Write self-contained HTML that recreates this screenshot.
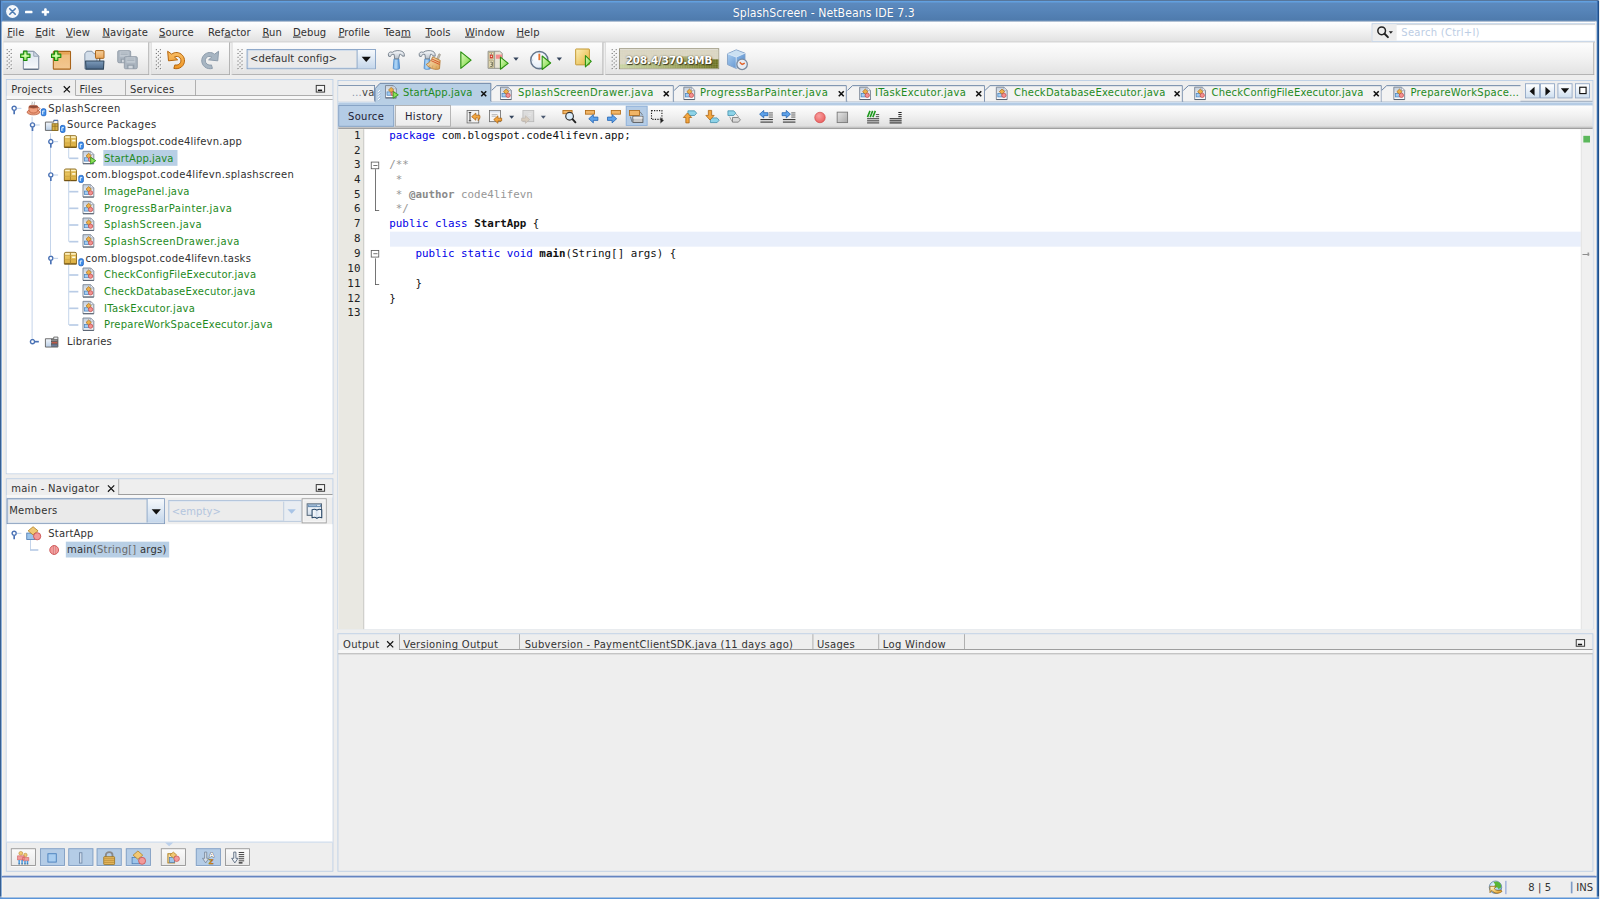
<!DOCTYPE html><html><head><meta charset="utf-8"><title>SplashScreen - NetBeans IDE 7.3</title><style>
html,body{margin:0;padding:0;background:#f6f6f6;}
body{width:1600px;height:899px;overflow:hidden;}
#root{position:absolute;left:0;top:0;width:1918.8px;height:1079px;transform:scale(.833333);transform-origin:0 0;background:#eeeeee;font-family:"DejaVu Sans","Liberation Sans",sans-serif;font-size:12px;color:#323232;overflow:hidden;}
#root div{position:absolute;box-sizing:border-box;}
.t{position:absolute;white-space:nowrap;line-height:20px;height:20px;letter-spacing:.35px;}
.m{position:absolute;white-space:nowrap;line-height:20px;height:20px;letter-spacing:.1px;}
.m u{text-decoration:underline;text-decoration-thickness:1.3px;text-underline-offset:1.4px;text-decoration-color:#000;}
.g{color:#1e8a1e;}
.code{position:absolute;white-space:pre;font-family:"DejaVu Sans Mono","Liberation Mono",monospace;font-size:13px;line-height:17.7px;height:17.7px;color:#111;}
.kw{color:#0000e6;}
.cm{color:#969696;}
.ln{position:absolute;white-space:pre;font-family:"DejaVu Sans Mono","Liberation Mono",monospace;font-size:13px;line-height:17.7px;height:17.7px;color:#222;text-align:right;width:26px;}
.tbg{background:linear-gradient(#fdfdfd,#f3f3f3 45%,#e3e3e3);border-right:1px solid #a9a9a9;border-bottom:1px solid #a9a9a9;border-left:1px solid #d9d9d9;}
.panel{border:1px solid #b9cde5;background:#eeeeee;}
.sep{background:#a4a4a4;width:1px;}
.btn{border:1px solid #8f8f8f;background:linear-gradient(#fbfbfb,#e9e9e9);box-shadow:0 1px 0 #fff;}
.btn.on{background:#b4cce6;border-color:#7f9cc0;}
</style></head><body><div id="root">
<div style="left:0px;top:0px;width:1918.8px;height:26px;background:linear-gradient(#5e8bbf,#5684b8 50%,#4e7aac);border-top:1.300px solid #27466e;border-bottom:1.500px solid #29568f;border-radius:3px 3px 0 0;"></div>
<div style="left:0px;top:1.3px;width:1918.8px;height:1.4px;background:#62a0e0"></div>
<svg style="position:absolute;left:6px;top:5px;overflow:visible" width="20" height="18" viewBox="0 0 20 18" ><circle cx="9" cy="8.800" r="7.700" fill="#f4f7fb"/><path d="M5.700 5.500l6.600 6.600M12.300 5.500l-6.600 6.600" stroke="#4f7db3" stroke-width="1.900" stroke-linecap="round"/></svg>
<div style="left:30px;top:13.2px;width:9.2px;height:2.5px;background:#fff;border-radius:1px"></div>
<div style="left:49.7px;top:13.2px;width:9.2px;height:2.5px;background:#fff;border-radius:1px"></div>
<div style="left:53.1px;top:9.8px;width:2.5px;height:9.2px;background:#fff;border-radius:1px"></div>
<span style="position:absolute;left:0;width:1977px;text-align:center;top:4.500px;line-height:20px;color:#fff;padding-left:0px;letter-spacing:.06px;font-family:'DejaVu Sans Condensed','DejaVu Sans',sans-serif;font-size:14.6px;text-shadow:0 1px 1px rgba(30,60,110,.6)">SplashScreen - NetBeans IDE 7.3</span>
<div style="left:2.4px;top:26.2px;width:1914px;height:25px;background:linear-gradient(#ffffff,#f4f4f4 40%,#e2e2e2);border-bottom:1.200px solid #bcbcbc;"></div>
<span class="m" style="left:8.8px;top:29.4px"><u>F</u>ile</span>
<span class="m" style="left:42.5px;top:29.4px"><u>E</u>dit</span>
<span class="m" style="left:79.2px;top:29.4px"><u>V</u>iew</span>
<span class="m" style="left:122.9px;top:29.4px"><u>N</u>avigate</span>
<span class="m" style="left:190.8px;top:29.4px"><u>S</u>ource</span>
<span class="m" style="left:249.6px;top:29.4px">Ref<u>a</u>ctor</span>
<span class="m" style="left:314.9px;top:29.4px"><u>R</u>un</span>
<span class="m" style="left:351.6px;top:29.4px"><u>D</u>ebug</span>
<span class="m" style="left:406.1px;top:29.4px"><u>P</u>rofile</span>
<span class="m" style="left:460.8px;top:29.4px">Tea<u>m</u></span>
<span class="m" style="left:510.6px;top:29.4px"><u>T</u>ools</span>
<span class="m" style="left:558px;top:29.4px"><u>W</u>indow</span>
<span class="m" style="left:619.8px;top:29.4px"><u>H</u>elp</span>
<div style="left:1646px;top:27.6px;width:269.5px;height:22px;background:#fff;border:1px solid #b7cbe3;box-shadow:inset 0 1px 1px #d8d8d8;"></div>
<div style="left:1647px;top:28.6px;width:29.4px;height:20px;background:#ededed"></div>
<svg style="position:absolute;left:1652px;top:31px;overflow:visible" width="20" height="15" viewBox="0 0 20 15" ><circle cx="6" cy="6" r="4.600" fill="none" stroke="#222" stroke-width="1.800"/><path d="M9.500 9.500l4 4" stroke="#222" stroke-width="2.400" stroke-linecap="round"/><path d="M14.500 6.500h5l-2.500 3z" fill="#222"/></svg>
<span class="m" style="left:1681.6px;top:28.8px;letter-spacing:.32px;color:#bccde4">Search (Ctrl+I)</span>
<div class="tbg" style="left:2.6px;top:51.2px;width:176.4px;height:38.4px;"></div>
<div class="tbg" style="left:180.8px;top:51.2px;width:95.19999999999999px;height:38.4px;"></div>
<div class="tbg" style="left:278px;top:51.2px;width:446.20000000000005px;height:38.4px;"></div>
<div class="tbg" style="left:726.2px;top:51.2px;width:1186.3999999999999px;height:38.4px;"></div>
<svg style="position:absolute;left:8.4px;top:59.2px;overflow:visible" width="7" height="26" viewBox="0 0 7 26" ><rect x="1" y="1.00" width="1.200" height="1.200" fill="#fff"/><rect x="0" y="0.00" width="1.300" height="1.300" fill="#6e6e6e"/><rect x="5.8" y="1.00" width="1.200" height="1.200" fill="#fff"/><rect x="4.8" y="0.00" width="1.300" height="1.300" fill="#6e6e6e"/><rect x="3.4" y="3.27" width="1.200" height="1.200" fill="#fff"/><rect x="2.4" y="2.27" width="1.300" height="1.300" fill="#6e6e6e"/><rect x="1" y="5.54" width="1.200" height="1.200" fill="#fff"/><rect x="0" y="4.54" width="1.300" height="1.300" fill="#6e6e6e"/><rect x="5.8" y="5.54" width="1.200" height="1.200" fill="#fff"/><rect x="4.8" y="4.54" width="1.300" height="1.300" fill="#6e6e6e"/><rect x="3.4" y="7.81" width="1.200" height="1.200" fill="#fff"/><rect x="2.4" y="6.81" width="1.300" height="1.300" fill="#6e6e6e"/><rect x="1" y="10.08" width="1.200" height="1.200" fill="#fff"/><rect x="0" y="9.08" width="1.300" height="1.300" fill="#6e6e6e"/><rect x="5.8" y="10.08" width="1.200" height="1.200" fill="#fff"/><rect x="4.8" y="9.08" width="1.300" height="1.300" fill="#6e6e6e"/><rect x="3.4" y="12.35" width="1.200" height="1.200" fill="#fff"/><rect x="2.4" y="11.35" width="1.300" height="1.300" fill="#6e6e6e"/><rect x="1" y="14.62" width="1.200" height="1.200" fill="#fff"/><rect x="0" y="13.62" width="1.300" height="1.300" fill="#6e6e6e"/><rect x="5.8" y="14.62" width="1.200" height="1.200" fill="#fff"/><rect x="4.8" y="13.62" width="1.300" height="1.300" fill="#6e6e6e"/><rect x="3.4" y="16.89" width="1.200" height="1.200" fill="#fff"/><rect x="2.4" y="15.89" width="1.300" height="1.300" fill="#6e6e6e"/><rect x="1" y="19.16" width="1.200" height="1.200" fill="#fff"/><rect x="0" y="18.16" width="1.300" height="1.300" fill="#6e6e6e"/><rect x="5.8" y="19.16" width="1.200" height="1.200" fill="#fff"/><rect x="4.8" y="18.16" width="1.300" height="1.300" fill="#6e6e6e"/><rect x="3.4" y="21.43" width="1.200" height="1.200" fill="#fff"/><rect x="2.4" y="20.43" width="1.300" height="1.300" fill="#6e6e6e"/><rect x="1" y="23.70" width="1.200" height="1.200" fill="#fff"/><rect x="0" y="22.70" width="1.300" height="1.300" fill="#6e6e6e"/><rect x="5.8" y="23.70" width="1.200" height="1.200" fill="#fff"/><rect x="4.8" y="22.70" width="1.300" height="1.300" fill="#6e6e6e"/></svg>
<svg style="position:absolute;left:186.6px;top:59.2px;overflow:visible" width="7" height="26" viewBox="0 0 7 26" ><rect x="1" y="1.00" width="1.200" height="1.200" fill="#fff"/><rect x="0" y="0.00" width="1.300" height="1.300" fill="#6e6e6e"/><rect x="5.8" y="1.00" width="1.200" height="1.200" fill="#fff"/><rect x="4.8" y="0.00" width="1.300" height="1.300" fill="#6e6e6e"/><rect x="3.4" y="3.27" width="1.200" height="1.200" fill="#fff"/><rect x="2.4" y="2.27" width="1.300" height="1.300" fill="#6e6e6e"/><rect x="1" y="5.54" width="1.200" height="1.200" fill="#fff"/><rect x="0" y="4.54" width="1.300" height="1.300" fill="#6e6e6e"/><rect x="5.8" y="5.54" width="1.200" height="1.200" fill="#fff"/><rect x="4.8" y="4.54" width="1.300" height="1.300" fill="#6e6e6e"/><rect x="3.4" y="7.81" width="1.200" height="1.200" fill="#fff"/><rect x="2.4" y="6.81" width="1.300" height="1.300" fill="#6e6e6e"/><rect x="1" y="10.08" width="1.200" height="1.200" fill="#fff"/><rect x="0" y="9.08" width="1.300" height="1.300" fill="#6e6e6e"/><rect x="5.8" y="10.08" width="1.200" height="1.200" fill="#fff"/><rect x="4.8" y="9.08" width="1.300" height="1.300" fill="#6e6e6e"/><rect x="3.4" y="12.35" width="1.200" height="1.200" fill="#fff"/><rect x="2.4" y="11.35" width="1.300" height="1.300" fill="#6e6e6e"/><rect x="1" y="14.62" width="1.200" height="1.200" fill="#fff"/><rect x="0" y="13.62" width="1.300" height="1.300" fill="#6e6e6e"/><rect x="5.8" y="14.62" width="1.200" height="1.200" fill="#fff"/><rect x="4.8" y="13.62" width="1.300" height="1.300" fill="#6e6e6e"/><rect x="3.4" y="16.89" width="1.200" height="1.200" fill="#fff"/><rect x="2.4" y="15.89" width="1.300" height="1.300" fill="#6e6e6e"/><rect x="1" y="19.16" width="1.200" height="1.200" fill="#fff"/><rect x="0" y="18.16" width="1.300" height="1.300" fill="#6e6e6e"/><rect x="5.8" y="19.16" width="1.200" height="1.200" fill="#fff"/><rect x="4.8" y="18.16" width="1.300" height="1.300" fill="#6e6e6e"/><rect x="3.4" y="21.43" width="1.200" height="1.200" fill="#fff"/><rect x="2.4" y="20.43" width="1.300" height="1.300" fill="#6e6e6e"/><rect x="1" y="23.70" width="1.200" height="1.200" fill="#fff"/><rect x="0" y="22.70" width="1.300" height="1.300" fill="#6e6e6e"/><rect x="5.8" y="23.70" width="1.200" height="1.200" fill="#fff"/><rect x="4.8" y="22.70" width="1.300" height="1.300" fill="#6e6e6e"/></svg>
<svg style="position:absolute;left:284.6px;top:59.2px;overflow:visible" width="7" height="26" viewBox="0 0 7 26" ><rect x="1" y="1.00" width="1.200" height="1.200" fill="#fff"/><rect x="0" y="0.00" width="1.300" height="1.300" fill="#6e6e6e"/><rect x="5.8" y="1.00" width="1.200" height="1.200" fill="#fff"/><rect x="4.8" y="0.00" width="1.300" height="1.300" fill="#6e6e6e"/><rect x="3.4" y="3.27" width="1.200" height="1.200" fill="#fff"/><rect x="2.4" y="2.27" width="1.300" height="1.300" fill="#6e6e6e"/><rect x="1" y="5.54" width="1.200" height="1.200" fill="#fff"/><rect x="0" y="4.54" width="1.300" height="1.300" fill="#6e6e6e"/><rect x="5.8" y="5.54" width="1.200" height="1.200" fill="#fff"/><rect x="4.8" y="4.54" width="1.300" height="1.300" fill="#6e6e6e"/><rect x="3.4" y="7.81" width="1.200" height="1.200" fill="#fff"/><rect x="2.4" y="6.81" width="1.300" height="1.300" fill="#6e6e6e"/><rect x="1" y="10.08" width="1.200" height="1.200" fill="#fff"/><rect x="0" y="9.08" width="1.300" height="1.300" fill="#6e6e6e"/><rect x="5.8" y="10.08" width="1.200" height="1.200" fill="#fff"/><rect x="4.8" y="9.08" width="1.300" height="1.300" fill="#6e6e6e"/><rect x="3.4" y="12.35" width="1.200" height="1.200" fill="#fff"/><rect x="2.4" y="11.35" width="1.300" height="1.300" fill="#6e6e6e"/><rect x="1" y="14.62" width="1.200" height="1.200" fill="#fff"/><rect x="0" y="13.62" width="1.300" height="1.300" fill="#6e6e6e"/><rect x="5.8" y="14.62" width="1.200" height="1.200" fill="#fff"/><rect x="4.8" y="13.62" width="1.300" height="1.300" fill="#6e6e6e"/><rect x="3.4" y="16.89" width="1.200" height="1.200" fill="#fff"/><rect x="2.4" y="15.89" width="1.300" height="1.300" fill="#6e6e6e"/><rect x="1" y="19.16" width="1.200" height="1.200" fill="#fff"/><rect x="0" y="18.16" width="1.300" height="1.300" fill="#6e6e6e"/><rect x="5.8" y="19.16" width="1.200" height="1.200" fill="#fff"/><rect x="4.8" y="18.16" width="1.300" height="1.300" fill="#6e6e6e"/><rect x="3.4" y="21.43" width="1.200" height="1.200" fill="#fff"/><rect x="2.4" y="20.43" width="1.300" height="1.300" fill="#6e6e6e"/><rect x="1" y="23.70" width="1.200" height="1.200" fill="#fff"/><rect x="0" y="22.70" width="1.300" height="1.300" fill="#6e6e6e"/><rect x="5.8" y="23.70" width="1.200" height="1.200" fill="#fff"/><rect x="4.8" y="22.70" width="1.300" height="1.300" fill="#6e6e6e"/></svg>
<svg style="position:absolute;left:734px;top:59.2px;overflow:visible" width="7" height="26" viewBox="0 0 7 26" ><rect x="1" y="1.00" width="1.200" height="1.200" fill="#fff"/><rect x="0" y="0.00" width="1.300" height="1.300" fill="#6e6e6e"/><rect x="5.8" y="1.00" width="1.200" height="1.200" fill="#fff"/><rect x="4.8" y="0.00" width="1.300" height="1.300" fill="#6e6e6e"/><rect x="3.4" y="3.27" width="1.200" height="1.200" fill="#fff"/><rect x="2.4" y="2.27" width="1.300" height="1.300" fill="#6e6e6e"/><rect x="1" y="5.54" width="1.200" height="1.200" fill="#fff"/><rect x="0" y="4.54" width="1.300" height="1.300" fill="#6e6e6e"/><rect x="5.8" y="5.54" width="1.200" height="1.200" fill="#fff"/><rect x="4.8" y="4.54" width="1.300" height="1.300" fill="#6e6e6e"/><rect x="3.4" y="7.81" width="1.200" height="1.200" fill="#fff"/><rect x="2.4" y="6.81" width="1.300" height="1.300" fill="#6e6e6e"/><rect x="1" y="10.08" width="1.200" height="1.200" fill="#fff"/><rect x="0" y="9.08" width="1.300" height="1.300" fill="#6e6e6e"/><rect x="5.8" y="10.08" width="1.200" height="1.200" fill="#fff"/><rect x="4.8" y="9.08" width="1.300" height="1.300" fill="#6e6e6e"/><rect x="3.4" y="12.35" width="1.200" height="1.200" fill="#fff"/><rect x="2.4" y="11.35" width="1.300" height="1.300" fill="#6e6e6e"/><rect x="1" y="14.62" width="1.200" height="1.200" fill="#fff"/><rect x="0" y="13.62" width="1.300" height="1.300" fill="#6e6e6e"/><rect x="5.8" y="14.62" width="1.200" height="1.200" fill="#fff"/><rect x="4.8" y="13.62" width="1.300" height="1.300" fill="#6e6e6e"/><rect x="3.4" y="16.89" width="1.200" height="1.200" fill="#fff"/><rect x="2.4" y="15.89" width="1.300" height="1.300" fill="#6e6e6e"/><rect x="1" y="19.16" width="1.200" height="1.200" fill="#fff"/><rect x="0" y="18.16" width="1.300" height="1.300" fill="#6e6e6e"/><rect x="5.8" y="19.16" width="1.200" height="1.200" fill="#fff"/><rect x="4.8" y="18.16" width="1.300" height="1.300" fill="#6e6e6e"/><rect x="3.4" y="21.43" width="1.200" height="1.200" fill="#fff"/><rect x="2.4" y="20.43" width="1.300" height="1.300" fill="#6e6e6e"/><rect x="1" y="23.70" width="1.200" height="1.200" fill="#fff"/><rect x="0" y="22.70" width="1.300" height="1.300" fill="#6e6e6e"/><rect x="5.8" y="23.70" width="1.200" height="1.200" fill="#fff"/><rect x="4.8" y="22.70" width="1.300" height="1.300" fill="#6e6e6e"/></svg>
<svg style="position:absolute;left:23.8px;top:60px;overflow:visible" width="24" height="24" viewBox="0 0 24 24" ><defs><linearGradient id="nf1" x1="0" y1="0" x2="0" y2="1"><stop offset="0" stop-color="#dde5ef"/><stop offset=".8" stop-color="#f1f5f9"/><stop offset="1" stop-color="#ffffff"/></linearGradient></defs>
<path d="M4 1.500h12.500l6 6V23H4z" fill="url(#nf1)" stroke="#76869b" stroke-width="1.200" stroke-linejoin="round"/>
<path d="M4.500 23.200h17.500" stroke="#5f6e82" stroke-width="1.400"/>
<path d="M16.500 1.500v6h6z" fill="#cfd9e6" stroke="#8a98ab" stroke-width="1" stroke-linejoin="round"/><defs><radialGradient id="plga" cx=".5" cy=".45" r=".6"><stop offset="0" stop-color="#e4ffc4"/><stop offset="1" stop-color="#74dc3c"/></radialGradient></defs>
<path d="M.8 5h3.600V1.400h4v3.600h3.600v4H8.400v3.600h-4V9H.8z" fill="url(#plga)" stroke="#1a8a0c" stroke-width="1.300" stroke-linejoin="round"/></svg>
<svg style="position:absolute;left:61.2px;top:60px;overflow:visible" width="24" height="24" viewBox="0 0 24 24" ><defs><linearGradient id="np1" x1="0" y1="0" x2="0" y2="1"><stop offset="0" stop-color="#f7d9ae"/><stop offset=".2" stop-color="#efbd7e"/><stop offset="1" stop-color="#f3c892"/></linearGradient></defs>
<rect x="3" y="1.700" width="20.600" height="21.300" rx=".8" fill="url(#np1)" stroke="#a9641a" stroke-width="1.300"/>
<rect x="3.800" y="2.500" width="19" height="3" fill="#e39a45" opacity=".8"/><defs><radialGradient id="plgb" cx=".5" cy=".45" r=".6"><stop offset="0" stop-color="#e4ffc4"/><stop offset="1" stop-color="#74dc3c"/></radialGradient></defs>
<path d="M.8 5h3.600V1.400h4v3.600h3.600v4H8.400v3.600h-4V9H.8z" fill="url(#plgb)" stroke="#1a8a0c" stroke-width="1.300" stroke-linejoin="round"/></svg>
<svg style="position:absolute;left:101px;top:60px;overflow:visible" width="24" height="24" viewBox="0 0 24 24" ><defs><linearGradient id="op1" x1="0" y1="0" x2="0" y2="1"><stop offset="0" stop-color="#7d9bba"/><stop offset="1" stop-color="#4a6788"/></linearGradient>
<linearGradient id="op2" x1="0" y1="0" x2="0" y2="1"><stop offset="0" stop-color="#f5cf9c"/><stop offset="1" stop-color="#eaa65a"/></linearGradient></defs>
<path d="M.8 22.500V4.500l2.500-3h6l2.500 3h3.500v18z" fill="#d3deea" stroke="#8595aa" stroke-width="1.200" stroke-linejoin="round"/>
<rect x="13.600" y=".7" width="10.200" height="9.300" rx=".6" fill="url(#op2)" stroke="#a9641a" stroke-width="1.200"/>
<path d="M18.700 10v3.500" stroke="#5a4a38" stroke-width="1.300"/>
<path d="M2.200 23l-.5-9.800h22l-.6 9.800z" fill="url(#op1)" stroke="#33495f" stroke-width="1.300" stroke-linejoin="round"/></svg>
<svg style="position:absolute;left:141px;top:60px;overflow:visible" width="24" height="24" viewBox="0 0 24 24" ><g opacity=".9"><rect x="0.3" y="0.8" width="15.5" height="14.5" rx="1.500" fill="#a5b0bc" stroke="#8893a0" stroke-width="1.100"/>
<rect x="2.8" y="1.6" width="10.5" height="6.5" fill="#bcc5ce"/><path d="M3.8 3.5999999999999996h8.5M3.8 5.3999999999999995h8.5" stroke="#9aa5b1" stroke-width=".9"/>
<rect x="3.8" y="10.4" width="8.5" height="5.0" fill="#8a96a3"/><rect x="5.3" y="11.7" width="5.0" height="3.1" fill="#cfd5dc"/><rect x="8.2" y="8" width="15.5" height="14.5" rx="1.500" fill="#a5b0bc" stroke="#8893a0" stroke-width="1.100"/>
<rect x="10.7" y="8.8" width="10.5" height="6.5" fill="#bcc5ce"/><path d="M11.7 10.8h8.5M11.7 12.6h8.5" stroke="#9aa5b1" stroke-width=".9"/>
<rect x="11.7" y="17.6" width="8.5" height="5.0" fill="#8a96a3"/><rect x="13.2" y="18.9" width="5.0" height="3.1" fill="#cfd5dc"/></g></svg>
<svg style="position:absolute;left:200.2px;top:60px;overflow:visible" width="24" height="24" viewBox="0 0 24 24" ><defs><linearGradient id="un1" x1="0" y1="0" x2="0" y2="1"><stop offset="0" stop-color="#f9c06a"/><stop offset="1" stop-color="#ee9420"/></linearGradient></defs>
<path d="M1.200 1.500l1 11.500 11-1.200-3.800-3.300c2.200-1.300 4.800-1 6.500.8 2 2.300 1.600 5.800-.8 7.600-1.600 1.200-3.400 1.500-5.300 1l-1.200 4.200c3.200.9 6.700.2 9.300-1.900 4.300-3.500 4.700-10 .9-14C15.300 2.400 9.800 2 6 5z" fill="url(#un1)" stroke="#b5650c" stroke-width="1.200" stroke-linejoin="round"/></svg>
<svg style="position:absolute;left:240.2px;top:60px;overflow:visible" width="24" height="24" viewBox="0 0 24 24" ><g transform="translate(23.500,0) scale(-1,1)"><path d="M1.200 1.500l1 11.500 11-1.200-3.800-3.300c2.200-1.300 4.800-1 6.500.8 2 2.300 1.600 5.800-.8 7.600-1.600 1.200-3.400 1.500-5.300 1l-1.200 4.200c3.200.9 6.700.2 9.300-1.900 4.300-3.500 4.700-10 .9-14C15.300 2.400 9.800 2 6 5z" fill="#a7b5c2" stroke="#8d9cab" stroke-width="1.200" stroke-linejoin="round"/></g></svg>
<div style="left:296.4px;top:59px;width:154.4px;height:23.6px;border:1px solid #7d9cc4;background:#eaeaea;box-shadow:inset 0 0 0 1px #c9d9ec;"></div>
<div style="left:428.4px;top:60px;width:21.4px;height:21.6px;background:linear-gradient(#f6f9fc,#c5d7eb);border-left:1px solid #7d9cc4;"></div>
<svg style="position:absolute;left:433.5px;top:67.5px;overflow:visible" width="11" height="7" viewBox="0 0 11 7" ><path d="M0 0h11L5.500 6.500z" fill="#111"/></svg>
<span class="m" style="left:300px;top:60.4px;letter-spacing:.12px">&lt;default config&gt;</span>
<svg style="position:absolute;left:465.4px;top:59.8px;overflow:visible" width="24" height="24" viewBox="0 0 24 24" ><defs><linearGradient id="hm1" x1="0" y1="0" x2="1" y2="0"><stop offset="0" stop-color="#7fb6ea"/><stop offset=".45" stop-color="#b4d8f6"/><stop offset="1" stop-color="#4f92d6"/></linearGradient>
<linearGradient id="hm2" x1="0" y1="0" x2="0" y2="1"><stop offset="0" stop-color="#fbfcfd"/><stop offset="1" stop-color="#b4bec9"/></linearGradient></defs>
<g transform="translate(0,0)"><path d="M7.800 10.600h5.800l.9 11.400c0 1.600-7.600 1.600-7.600 0z" fill="url(#hm1)" stroke="#3f7fc4" stroke-width=".9" stroke-linejoin="round"/>
<path d="M1 6C.6 3.200 3 1.600 5.800 2.800 8.500.4 14.500.2 17.400 1.600c2.200 1 3.200 3.200 2.800 5.900l-2.700-.3c-.3-1.500-1.300-2.100-2.800-2.100L13.200 10.600H8.600L8 5.400C6 4.600 4.200 5.600 3.600 7.800L1.500 7.600z" fill="url(#hm2)" stroke="#737e8a" stroke-width="1.100" stroke-linejoin="round"/></g></svg>
<svg style="position:absolute;left:502.2px;top:59.8px;overflow:visible" width="27" height="24" viewBox="0 0 27 24" ><defs><linearGradient id="cb1" x1="0" y1="0" x2="1" y2="0"><stop offset="0" stop-color="#7fb6ea"/><stop offset=".45" stop-color="#b4d8f6"/><stop offset="1" stop-color="#4f92d6"/></linearGradient>
<linearGradient id="cb2" x1="0" y1="0" x2="0" y2="1"><stop offset="0" stop-color="#fbfcfd"/><stop offset="1" stop-color="#b4bec9"/></linearGradient></defs>
<g transform="translate(0,0)"><path d="M7.800 10.600h5.800l.9 11.400c0 1.600-7.600 1.600-7.600 0z" fill="url(#cb1)" stroke="#3f7fc4" stroke-width=".9" stroke-linejoin="round"/>
<path d="M1 6C.6 3.200 3 1.600 5.800 2.800 8.500.4 14.500.2 17.400 1.600c2.200 1 3.200 3.200 2.800 5.900l-2.700-.3c-.3-1.500-1.300-2.100-2.800-2.100L13.200 10.600H8.600L8 5.400C6 4.600 4.200 5.600 3.600 7.800L1.500 7.600z" fill="url(#cb2)" stroke="#737e8a" stroke-width="1.100" stroke-linejoin="round"/></g><defs><linearGradient id="cb3" x1="0" y1="0" x2="1" y2="1"><stop offset="0" stop-color="#fae6c0"/><stop offset="1" stop-color="#dda050"/></linearGradient></defs>
<path d="M24.800 4.500l1.800 1-2.600 6-2-.9z" fill="#c9c0b0" stroke="#8a8478" stroke-width=".7"/>
<path d="M17.200 8.200l9 4.200-.8 10.200c-4.800 1.800-11.400-.2-16-5.200 3.800-2 6.400-5 7.800-9.200z" fill="url(#cb3)" stroke="#b27a34" stroke-width="1" stroke-linejoin="round"/>
<path d="M16.300 10.800l9.500 4.300M15.400 12.800l10.200 4.600" stroke="#d65a30" stroke-width="1.200" fill="none"/>
<path d="M14 17.500l-1.500 2.500M17.500 18.500l-1 4M21.500 19.500v3.500" stroke="#c99a5c" stroke-width=".8"/></svg>
<svg style="position:absolute;left:551.6px;top:60.6px;overflow:visible" width="15" height="22" viewBox="0 0 15 22" ><defs><linearGradient id="rn1" x1="0" y1="0" x2="1" y2="1"><stop offset="0" stop-color="#e2fac8"/><stop offset=".55" stop-color="#a4e674"/><stop offset="1" stop-color="#52b82a"/></linearGradient></defs><path d="M1 1.200l12.300 9.900L1 21z" fill="url(#rn1)" stroke="#2a9010" stroke-width="1.400" stroke-linejoin="round"/></svg>
<svg style="position:absolute;left:585px;top:60px;overflow:visible" width="25" height="24" viewBox="0 0 25 24" ><defs><linearGradient id="db1" x1="0" y1="0" x2="1" y2="1"><stop offset="0" stop-color="#e2fac8"/><stop offset=".55" stop-color="#a4e674"/><stop offset="1" stop-color="#52b82a"/></linearGradient></defs>
<path d="M.7 1.500h14l3 2.500v18H.7z" fill="#e8e4d6" stroke="#86867e" stroke-width="1"/>
<path d="M8.500 1.500v20.500" stroke="#8f8f86" stroke-width="1"/>
<rect x="1.800" y="3" width="5.600" height="8" fill="#f4ecc8" stroke="#a39868" stroke-width=".7"/>
<rect x="2.800" y="5.500" width="3.600" height="4.600" fill="#c82a1c"/><rect x="3.800" y="6.800" width="1.600" height="1.800" fill="#f6d8d0"/><path d="M4.600 3.500v2" stroke="#555" stroke-width=".8"/>
<rect x="1.800" y="12.500" width="5.600" height="8.500" fill="#f4ecc8" stroke="#a39868" stroke-width=".7"/>
<path d="M3.200 14.500h2.600v2.600H3.800M5.800 17.100v2.600H3.200" stroke="#443" stroke-width=".9" fill="none"/>
<rect x="10" y="5.500" width="7.500" height="5" fill="#f58c8c"/>
<path d="M15.500 8.500l9.300 7.600-9.300 7z" fill="url(#db1)" stroke="#2a9010" stroke-width="1.300" stroke-linejoin="round"/></svg>
<svg style="position:absolute;left:615.8px;top:68.8px;overflow:visible" width="6.4" height="3.8" viewBox="0 0 6.4 3.8" ><path d="M0 0h6.400L3.200 3.800z" fill="#34445c"/></svg>
<svg style="position:absolute;left:635.8px;top:59.6px;overflow:visible" width="26" height="24" viewBox="0 0 26 24" ><defs><linearGradient id="pf1" x1="0" y1="0" x2="1" y2="1"><stop offset="0" stop-color="#e2fac8"/><stop offset=".55" stop-color="#a4e674"/><stop offset="1" stop-color="#52b82a"/></linearGradient><radialGradient id="pf2" cx=".4" cy=".35" r=".75"><stop offset="0" stop-color="#ffffff"/><stop offset=".7" stop-color="#e6eef7"/><stop offset="1" stop-color="#b9cde2"/></radialGradient></defs>
<circle cx="11.200" cy="12.200" r="10.300" fill="url(#pf2)" stroke="#63748a" stroke-width="1.700"/>
<path d="M11.200 4.500v7.700" stroke="#e8732e" stroke-width="2.200"/>
<path d="M11.200 2.500v1.500M2 12.200h1.500M11.200 20.500V22" stroke="#9fb0c4" stroke-width=".8"/>
<path d="M14.600 7.200l10.200 8.400-10.200 7.800z" fill="url(#pf1)" stroke="#2a9010" stroke-width="1.300" stroke-linejoin="round"/></svg>
<svg style="position:absolute;left:668px;top:68.8px;overflow:visible" width="6.4" height="3.8" viewBox="0 0 6.4 3.8" ><path d="M0 0h6.400L3.200 3.800z" fill="#34445c"/></svg>
<svg style="position:absolute;left:690.4px;top:57.6px;overflow:visible" width="21" height="23" viewBox="0 0 21 23" ><defs><linearGradient id="ts1" x1="0" y1="0" x2="1" y2="1"><stop offset="0" stop-color="#e2fac8"/><stop offset=".55" stop-color="#a4e674"/><stop offset="1" stop-color="#52b82a"/></linearGradient><linearGradient id="ts2" x1="0" y1="0" x2="1" y2="1"><stop offset="0" stop-color="#fdf0b8"/><stop offset="1" stop-color="#e3b23c"/></linearGradient></defs>
<rect x=".8" y=".8" width="16.500" height="19" rx=".5" fill="url(#ts2)" stroke="#c49a34" stroke-width="1.200"/>
<path d="M12.500 8.800l7 6.800-7 6.600z" fill="url(#ts1)" stroke="#2a9010" stroke-width="1.300" stroke-linejoin="round"/></svg>
<div style="left:742.8px;top:57.7px;width:120.2px;height:24.9px;border:1.200px solid #8c866c;overflow:hidden;"><svg style="position:absolute;left:0;top:0" width="120" height="25" viewBox="0 0 120 25"><defs><linearGradient id="mg1" x1="0" y1="0" x2="1" y2="0"><stop offset="0" stop-color="#c6d4a0"/><stop offset=".45" stop-color="#a3ae68"/><stop offset=".8" stop-color="#757e26"/><stop offset="1" stop-color="#5a620a"/></linearGradient></defs><rect width="120" height="25" fill="#d9d5c1"/><path d="M0 25V18h15l6-1.200 28-1.500 8-3.500 6.500-3h22l1-1.200.8 1.200v3.200h33v13z" fill="url(#mg1)"/><path d="M63 8.800h23v3h-23z" fill="#d9d5c1" opacity=".25"/><path d="M2.05 0V25" stroke="#e6e3d4" stroke-width=".5" opacity=".4"/><path d="M4.1 0V25" stroke="#e6e3d4" stroke-width=".5" opacity=".4"/><path d="M6.1499999999999995 0V25" stroke="#e6e3d4" stroke-width=".5" opacity=".4"/><path d="M8.2 0V25" stroke="#e6e3d4" stroke-width=".5" opacity=".4"/><path d="M10.25 0V25" stroke="#e6e3d4" stroke-width=".5" opacity=".4"/><path d="M12.299999999999999 0V25" stroke="#e6e3d4" stroke-width=".5" opacity=".4"/><path d="M14.349999999999998 0V25" stroke="#e6e3d4" stroke-width=".5" opacity=".4"/><path d="M16.4 0V25" stroke="#e6e3d4" stroke-width=".5" opacity=".4"/><path d="M18.45 0V25" stroke="#e6e3d4" stroke-width=".5" opacity=".4"/><path d="M20.5 0V25" stroke="#e6e3d4" stroke-width=".5" opacity=".4"/><path d="M22.549999999999997 0V25" stroke="#e6e3d4" stroke-width=".5" opacity=".4"/><path d="M24.599999999999998 0V25" stroke="#e6e3d4" stroke-width=".5" opacity=".4"/><path d="M26.65 0V25" stroke="#e6e3d4" stroke-width=".5" opacity=".4"/><path d="M28.699999999999996 0V25" stroke="#e6e3d4" stroke-width=".5" opacity=".4"/><path d="M30.749999999999996 0V25" stroke="#e6e3d4" stroke-width=".5" opacity=".4"/><path d="M32.8 0V25" stroke="#e6e3d4" stroke-width=".5" opacity=".4"/><path d="M34.849999999999994 0V25" stroke="#e6e3d4" stroke-width=".5" opacity=".4"/><path d="M36.9 0V25" stroke="#e6e3d4" stroke-width=".5" opacity=".4"/><path d="M38.949999999999996 0V25" stroke="#e6e3d4" stroke-width=".5" opacity=".4"/><path d="M41.0 0V25" stroke="#e6e3d4" stroke-width=".5" opacity=".4"/><path d="M43.05 0V25" stroke="#e6e3d4" stroke-width=".5" opacity=".4"/><path d="M45.099999999999994 0V25" stroke="#e6e3d4" stroke-width=".5" opacity=".4"/><path d="M47.15 0V25" stroke="#e6e3d4" stroke-width=".5" opacity=".4"/><path d="M49.199999999999996 0V25" stroke="#e6e3d4" stroke-width=".5" opacity=".4"/><path d="M51.24999999999999 0V25" stroke="#e6e3d4" stroke-width=".5" opacity=".4"/><path d="M53.3 0V25" stroke="#e6e3d4" stroke-width=".5" opacity=".4"/><path d="M55.349999999999994 0V25" stroke="#e6e3d4" stroke-width=".5" opacity=".4"/><path d="M57.39999999999999 0V25" stroke="#e6e3d4" stroke-width=".5" opacity=".4"/><path d="M59.449999999999996 0V25" stroke="#e6e3d4" stroke-width=".5" opacity=".4"/><path d="M61.49999999999999 0V25" stroke="#e6e3d4" stroke-width=".5" opacity=".4"/><path d="M63.55 0V25" stroke="#e6e3d4" stroke-width=".5" opacity=".4"/><path d="M65.6 0V25" stroke="#e6e3d4" stroke-width=".5" opacity=".4"/><path d="M67.64999999999999 0V25" stroke="#e6e3d4" stroke-width=".5" opacity=".4"/><path d="M69.69999999999999 0V25" stroke="#e6e3d4" stroke-width=".5" opacity=".4"/><path d="M71.75 0V25" stroke="#e6e3d4" stroke-width=".5" opacity=".4"/><path d="M73.8 0V25" stroke="#e6e3d4" stroke-width=".5" opacity=".4"/><path d="M75.85 0V25" stroke="#e6e3d4" stroke-width=".5" opacity=".4"/><path d="M77.89999999999999 0V25" stroke="#e6e3d4" stroke-width=".5" opacity=".4"/><path d="M79.94999999999999 0V25" stroke="#e6e3d4" stroke-width=".5" opacity=".4"/><path d="M82.0 0V25" stroke="#e6e3d4" stroke-width=".5" opacity=".4"/><path d="M84.05 0V25" stroke="#e6e3d4" stroke-width=".5" opacity=".4"/><path d="M86.1 0V25" stroke="#e6e3d4" stroke-width=".5" opacity=".4"/><path d="M88.14999999999999 0V25" stroke="#e6e3d4" stroke-width=".5" opacity=".4"/><path d="M90.19999999999999 0V25" stroke="#e6e3d4" stroke-width=".5" opacity=".4"/><path d="M92.24999999999999 0V25" stroke="#e6e3d4" stroke-width=".5" opacity=".4"/><path d="M94.3 0V25" stroke="#e6e3d4" stroke-width=".5" opacity=".4"/><path d="M96.35 0V25" stroke="#e6e3d4" stroke-width=".5" opacity=".4"/><path d="M98.39999999999999 0V25" stroke="#e6e3d4" stroke-width=".5" opacity=".4"/><path d="M100.44999999999999 0V25" stroke="#e6e3d4" stroke-width=".5" opacity=".4"/><path d="M102.49999999999999 0V25" stroke="#e6e3d4" stroke-width=".5" opacity=".4"/><path d="M104.55 0V25" stroke="#e6e3d4" stroke-width=".5" opacity=".4"/><path d="M106.6 0V25" stroke="#e6e3d4" stroke-width=".5" opacity=".4"/><path d="M108.64999999999999 0V25" stroke="#e6e3d4" stroke-width=".5" opacity=".4"/><path d="M110.69999999999999 0V25" stroke="#e6e3d4" stroke-width=".5" opacity=".4"/><path d="M112.74999999999999 0V25" stroke="#e6e3d4" stroke-width=".5" opacity=".4"/><path d="M114.79999999999998 0V25" stroke="#e6e3d4" stroke-width=".5" opacity=".4"/><path d="M116.85 0V25" stroke="#e6e3d4" stroke-width=".5" opacity=".4"/><path d="M118.89999999999999 0V25" stroke="#e6e3d4" stroke-width=".5" opacity=".4"/><path d="M0 2.05H120" stroke="#e6e3d4" stroke-width=".5" opacity=".4"/><path d="M0 4.1H120" stroke="#e6e3d4" stroke-width=".5" opacity=".4"/><path d="M0 6.1499999999999995H120" stroke="#e6e3d4" stroke-width=".5" opacity=".4"/><path d="M0 8.2H120" stroke="#e6e3d4" stroke-width=".5" opacity=".4"/><path d="M0 10.25H120" stroke="#e6e3d4" stroke-width=".5" opacity=".4"/><path d="M0 12.299999999999999H120" stroke="#e6e3d4" stroke-width=".5" opacity=".4"/><path d="M0 14.349999999999998H120" stroke="#e6e3d4" stroke-width=".5" opacity=".4"/><path d="M0 16.4H120" stroke="#e6e3d4" stroke-width=".5" opacity=".4"/><path d="M0 18.45H120" stroke="#e6e3d4" stroke-width=".5" opacity=".4"/><path d="M0 20.5H120" stroke="#e6e3d4" stroke-width=".5" opacity=".4"/><path d="M0 22.549999999999997H120" stroke="#e6e3d4" stroke-width=".5" opacity=".4"/></svg><span style="position:absolute;left:0;width:118px;text-align:center;top:3.900px;line-height:20px;font-weight:bold;font-size:12.400px;color:#fff;text-shadow:1px 1px 1px #3a3a20,0 0 2px #55553a;letter-spacing:-.05px">208.4/370.8MB</span></div>
<svg style="position:absolute;left:872.4px;top:58.6px;overflow:visible" width="26" height="26" viewBox="0 0 26 26" ><defs><linearGradient id="pr1" x1="0" y1="0" x2="1" y2="1"><stop offset="0" stop-color="#b5d6f5"/><stop offset="1" stop-color="#4a82c6"/></linearGradient></defs>
<path d="M1 5.500l10.500-4.700L22 4.800v12.500l-10.500 5.900L1 18.500z" fill="url(#pr1)" stroke="#86a2c6" stroke-width="1.100" stroke-linejoin="round"/>
<path d="M1.500 5.800l10 3.800 10-4.500L11.500 1.300z" fill="#cbe0f2"/>
<path d="M1 5.500l10.500 4 10.500-4.700M11.500 9.500v13.500" stroke="#dbe9f8" stroke-width="1" fill="none"/>
<circle cx="18.500" cy="18.200" r="6.300" fill="#e8edf4" stroke="#7b8ba0" stroke-width="1.600"/>
<path d="M18.500 18.400l-2.800-2.600M18.500 18.400l3.200-1.600" stroke="#e2622a" stroke-width="1.700" fill="none"/></svg>
<div class="panel" style="left:7px;top:95px;width:393.4px;height:474px;"></div>
<div style="left:8px;top:119.2px;width:391.4px;height:1px;background:#9a9a9a"></div>
<div style="left:8px;top:120.2px;width:391.4px;height:447.8px;background:#fff"></div>
<span class="t" style="left:13.4px;top:98.25px;letter-spacing:0.33px;">Projects</span>
<svg style="position:absolute;left:75.6px;top:103.2px;overflow:visible" width="8.4" height="8.4" viewBox="0 0 8.4 8.4" ><path d="M.5 .5l7.4 7.4M7.9 .5l-7.4 7.4" stroke="#111" stroke-width="1.4"/></svg>
<div class="sep" style="left:90px;top:96px;width:1.1px;height:19px;"></div>
<span class="t" style="left:95.4px;top:98.25px;letter-spacing:0.33px;">Files</span>
<div class="sep" style="left:150.2px;top:96px;width:1.1px;height:18.5px;"></div>
<span class="t" style="left:156px;top:98.25px;letter-spacing:0.33px;">Services</span>
<div class="sep" style="left:234.2px;top:96px;width:1.1px;height:18.5px;"></div>
<div style="left:90.6px;top:114px;width:308.8px;height:1.1px;background:#8e8e8e"></div>
<div style="left:8px;top:115.1px;width:391.4px;height:4.2px;background:#f7f7f7"></div>
<svg style="position:absolute;left:379px;top:102px;overflow:visible" width="11" height="9" viewBox="0 0 11 9" ><rect x=".5" y=".5" width="10" height="8" fill="#f4f4f4" stroke="#3a3a3a" stroke-width="1.200"/><rect x="2.500" y="5.500" width="5" height="1.800" fill="#111"/></svg>
<div style="left:37.699999999999996px;top:140px;width:1.2px;height:266px;background:#b9cce6"></div>
<div style="left:59.99999999999999px;top:160px;width:1.2px;height:146px;background:#b9cce6"></div>
<div style="left:82.30000000000001px;top:176px;width:1.2px;height:14px;background:#b9cce6"></div>
<div style="left:82.9px;top:189.4px;width:11.0px;height:1.2px;background:#b9cce6"></div>
<div style="left:82.30000000000001px;top:216px;width:1.2px;height:74px;background:#b9cce6"></div>
<div style="left:82.9px;top:229.4px;width:11.0px;height:1.2px;background:#b9cce6"></div>
<div style="left:82.9px;top:249.4px;width:11.0px;height:1.2px;background:#b9cce6"></div>
<div style="left:82.9px;top:269.4px;width:11.0px;height:1.2px;background:#b9cce6"></div>
<div style="left:82.9px;top:289.4px;width:11.0px;height:1.2px;background:#b9cce6"></div>
<div style="left:82.30000000000001px;top:316px;width:1.2px;height:74px;background:#b9cce6"></div>
<div style="left:82.9px;top:329.4px;width:11.0px;height:1.2px;background:#b9cce6"></div>
<div style="left:82.9px;top:349.4px;width:11.0px;height:1.2px;background:#b9cce6"></div>
<div style="left:82.9px;top:369.4px;width:11.0px;height:1.2px;background:#b9cce6"></div>
<div style="left:82.9px;top:389.4px;width:11.0px;height:1.2px;background:#b9cce6"></div>
<svg style="position:absolute;left:32.0px;top:120.8px;overflow:visible" width="17.4" height="17.4" viewBox="0 0 16 16" ><ellipse cx="7.500" cy="12.500" rx="7" ry="3" fill="#e89a7a" stroke="#b85a3a" stroke-width=".8"/>
<path d="M2.500 6.500h10v3c0 2.500-2 4-5 4s-5-1.500-5-4z" fill="#f0a080" stroke="#b85a3a" stroke-width=".8"/>
<ellipse cx="7.500" cy="6.500" rx="5" ry="1.600" fill="#8a4a3a" stroke="#b85a3a" stroke-width=".6"/>
<path d="M12.500 7.500c2.500-.5 3 2.500 0 3" fill="none" stroke="#b85a3a" stroke-width="1"/>
<path d="M6 4.500c-1-1.500 1-2 0-3.500M8.500 4.500c-1-1.500 1-2 0-3.500" stroke="#9a9a9a" stroke-width=".9" fill="none"/></svg><svg style="position:absolute;left:49.4px;top:129.4px;overflow:visible" width="7" height="11" viewBox="0 0 7 11" ><rect x=".6" y="1.500" width="5.400" height="8.400" rx="1.800" fill="#3f8fea" stroke="#1d5fc0" stroke-width="1"/><path d="M2.300 4.200h2.400M2.300 4.200v4" stroke="#fff" stroke-width="1.100" fill="none"/></svg><svg style="position:absolute;left:12.5px;top:125.5px;overflow:visible" width="14" height="13" viewBox="0 0 14 13" ><circle cx="4" cy="4" r="2.500" fill="#fff" stroke="#4a72b5" stroke-width="1.700"/><path d="M4 6.800v4.400" stroke="#4a72b5" stroke-width="2"/><path d="M7.200 4h5.500" stroke="#bccfe8" stroke-width="1.200"/></svg><span class="t" style="left:58.0px;top:120px;letter-spacing:0.497px">SplashScreen</span>
<svg style="position:absolute;left:54.3px;top:142px;overflow:visible" width="16" height="16" viewBox="0 0 16 16" ><defs><linearGradient id="sp1" x1="0" y1="0" x2="0" y2="1"><stop offset="0" stop-color="#ffffff"/><stop offset="1" stop-color="#b8cde6"/></linearGradient></defs>
<path d="M.5 14.500v-10h10v-2h5v12z" fill="url(#sp1)" stroke="#555" stroke-width="1"/>
<path d="M10.500 2.500h5" stroke="#4a6fb0" stroke-width="1.500"/>
<rect x="8.500" y="6.500" width="7" height="8" fill="#d8b04a" stroke="#8a6a1a" stroke-width="1"/>
<path d="M12 6.500v8M8.500 9.500h7" stroke="#8a6a1a" stroke-width=".8"/></svg><svg style="position:absolute;left:71.7px;top:149.4px;overflow:visible" width="7" height="11" viewBox="0 0 7 11" ><rect x=".6" y="1.500" width="5.400" height="8.400" rx="1.800" fill="#3f8fea" stroke="#1d5fc0" stroke-width="1"/><path d="M2.300 4.200h2.400M2.300 4.200v4" stroke="#fff" stroke-width="1.100" fill="none"/></svg><svg style="position:absolute;left:34.8px;top:145.5px;overflow:visible" width="14" height="13" viewBox="0 0 14 13" ><circle cx="4" cy="4" r="2.500" fill="#fff" stroke="#4a72b5" stroke-width="1.700"/><path d="M4 6.800v4.400" stroke="#4a72b5" stroke-width="2"/><path d="M7.200 4h5.500" stroke="#bccfe8" stroke-width="1.200"/></svg><span class="t" style="left:80.3px;top:140px;letter-spacing:0.441px">Source Packages</span>
<svg style="position:absolute;left:76.39999999999999px;top:162.2px;overflow:visible" width="17" height="16" viewBox="0 0 17 16" ><defs><linearGradient id="pk1" x1="0" y1="0" x2="0" y2="1"><stop offset="0" stop-color="#f6e6ac"/><stop offset=".3" stop-color="#ecc964"/><stop offset="1" stop-color="#d9ac3e"/></linearGradient></defs>
<path d="M1.200 2.600Q1.200 .8 3 .8H14Q15.800 .8 15.800 2.600V14.600H1.200z" fill="url(#pk1)" stroke="#8c6a1c" stroke-width="1.100" stroke-linejoin="round"/>
<path d="M1.200 14.800h14.600" stroke="#6e5010" stroke-width="1.300"/>
<path d="M8.500 .8v14" stroke="#a07c26" stroke-width="1"/><path d="M1.500 4.600h14M1.500 9.600h14" stroke="#c9a040" stroke-width=".8"/>
<rect x="10.600" y="5.800" width="3.800" height="1.800" fill="#fffbe8"/><path d="M2.500 2.600h5M9.500 2.600h5" stroke="#fdf4cc" stroke-width="1.400"/></svg><svg style="position:absolute;left:94.0px;top:169.4px;overflow:visible" width="7" height="11" viewBox="0 0 7 11" ><rect x=".6" y="1.500" width="5.400" height="8.400" rx="1.800" fill="#3f8fea" stroke="#1d5fc0" stroke-width="1"/><path d="M2.300 4.200h2.400M2.300 4.200v4" stroke="#fff" stroke-width="1.100" fill="none"/></svg><svg style="position:absolute;left:57.099999999999994px;top:165.5px;overflow:visible" width="14" height="13" viewBox="0 0 14 13" ><circle cx="4" cy="4" r="2.500" fill="#fff" stroke="#4a72b5" stroke-width="1.700"/><path d="M4 6.800v4.400" stroke="#4a72b5" stroke-width="2"/><path d="M7.200 4h5.500" stroke="#bccfe8" stroke-width="1.200"/></svg><span class="t" style="left:102.6px;top:160px;letter-spacing:0.246px">com.blogspot.code4lifevn.app</span>
<div style="left:123.5px;top:180.2px;width:89px;height:19.2px;background:#b8cfe5"></div><svg style="position:absolute;left:98.9px;top:181.4px;overflow:visible" width="14.2" height="16" viewBox="0 0 14.2 16" ><defs><linearGradient id="jf1" x1="0" y1="0" x2="0" y2="1"><stop offset="0" stop-color="#c3cedb"/><stop offset=".75" stop-color="#f4f6f9"/><stop offset="1" stop-color="#ffffff"/></linearGradient></defs>
<path d="M.6 .6h9.200l3.800 3.800V15.400H.6z" fill="url(#jf1)" stroke="#7b8595" stroke-width="1.100" stroke-linejoin="round"/>
<path d="M.6 15.500h13" stroke="#56606f" stroke-width="1.200"/>
<path d="M9.800 .8v3.600h3.600z" fill="#ffffff" stroke="#8b95a5" stroke-width=".7" stroke-linejoin="round"/>
<rect x="2.400" y="8.300" width="5.300" height="4" fill="#a4cdf0" stroke="#4a84be" stroke-width=".9"/>
<path d="M7.400 2.900l3.200 3.100-3.200 3.100-3.200-3.100z" fill="#eeb04a" stroke="#a8701c" stroke-width=".9"/>
<circle cx="9.700" cy="10.400" r="2.600" fill="#f39090" stroke="#c24a4a" stroke-width=".9"/><path d="M9.800 7.800l6.200 4-6.200 4z" fill="#8ee05a" stroke="#2a9a14" stroke-width="1" stroke-linejoin="round"/></svg><span class="t g" style="left:124.9px;top:180px;letter-spacing:0.12px">StartApp.java</span>
<svg style="position:absolute;left:76.39999999999999px;top:202.2px;overflow:visible" width="17" height="16" viewBox="0 0 17 16" ><defs><linearGradient id="pk1" x1="0" y1="0" x2="0" y2="1"><stop offset="0" stop-color="#f6e6ac"/><stop offset=".3" stop-color="#ecc964"/><stop offset="1" stop-color="#d9ac3e"/></linearGradient></defs>
<path d="M1.200 2.600Q1.200 .8 3 .8H14Q15.800 .8 15.800 2.600V14.600H1.200z" fill="url(#pk1)" stroke="#8c6a1c" stroke-width="1.100" stroke-linejoin="round"/>
<path d="M1.200 14.800h14.600" stroke="#6e5010" stroke-width="1.300"/>
<path d="M8.500 .8v14" stroke="#a07c26" stroke-width="1"/><path d="M1.500 4.600h14M1.500 9.600h14" stroke="#c9a040" stroke-width=".8"/>
<rect x="10.600" y="5.800" width="3.800" height="1.800" fill="#fffbe8"/><path d="M2.500 2.600h5M9.500 2.600h5" stroke="#fdf4cc" stroke-width="1.400"/></svg><svg style="position:absolute;left:94.0px;top:209.4px;overflow:visible" width="7" height="11" viewBox="0 0 7 11" ><rect x=".6" y="1.500" width="5.400" height="8.400" rx="1.800" fill="#3f8fea" stroke="#1d5fc0" stroke-width="1"/><path d="M2.300 4.200h2.400M2.300 4.200v4" stroke="#fff" stroke-width="1.100" fill="none"/></svg><svg style="position:absolute;left:57.099999999999994px;top:205.5px;overflow:visible" width="14" height="13" viewBox="0 0 14 13" ><circle cx="4" cy="4" r="2.500" fill="#fff" stroke="#4a72b5" stroke-width="1.700"/><path d="M4 6.800v4.400" stroke="#4a72b5" stroke-width="2"/><path d="M7.200 4h5.500" stroke="#bccfe8" stroke-width="1.200"/></svg><span class="t" style="left:102.6px;top:200px;letter-spacing:0.366px">com.blogspot.code4lifevn.splashscreen</span>
<svg style="position:absolute;left:98.9px;top:221.4px;overflow:visible" width="14.2" height="16" viewBox="0 0 14.2 16" ><defs><linearGradient id="jf2" x1="0" y1="0" x2="0" y2="1"><stop offset="0" stop-color="#c3cedb"/><stop offset=".75" stop-color="#f4f6f9"/><stop offset="1" stop-color="#ffffff"/></linearGradient></defs>
<path d="M.6 .6h9.200l3.800 3.800V15.400H.6z" fill="url(#jf2)" stroke="#7b8595" stroke-width="1.100" stroke-linejoin="round"/>
<path d="M.6 15.500h13" stroke="#56606f" stroke-width="1.200"/>
<path d="M9.800 .8v3.600h3.600z" fill="#ffffff" stroke="#8b95a5" stroke-width=".7" stroke-linejoin="round"/>
<rect x="2.400" y="8.300" width="5.300" height="4" fill="#a4cdf0" stroke="#4a84be" stroke-width=".9"/>
<path d="M7.400 2.900l3.200 3.100-3.200 3.100-3.200-3.100z" fill="#eeb04a" stroke="#a8701c" stroke-width=".9"/>
<circle cx="9.700" cy="10.400" r="2.600" fill="#f39090" stroke="#c24a4a" stroke-width=".9"/></svg><span class="t g" style="left:124.9px;top:220px;letter-spacing:0.254px">ImagePanel.java</span>
<svg style="position:absolute;left:98.9px;top:241.4px;overflow:visible" width="14.2" height="16" viewBox="0 0 14.2 16" ><defs><linearGradient id="jf3" x1="0" y1="0" x2="0" y2="1"><stop offset="0" stop-color="#c3cedb"/><stop offset=".75" stop-color="#f4f6f9"/><stop offset="1" stop-color="#ffffff"/></linearGradient></defs>
<path d="M.6 .6h9.200l3.800 3.800V15.400H.6z" fill="url(#jf3)" stroke="#7b8595" stroke-width="1.100" stroke-linejoin="round"/>
<path d="M.6 15.500h13" stroke="#56606f" stroke-width="1.200"/>
<path d="M9.800 .8v3.600h3.600z" fill="#ffffff" stroke="#8b95a5" stroke-width=".7" stroke-linejoin="round"/>
<rect x="2.400" y="8.300" width="5.300" height="4" fill="#a4cdf0" stroke="#4a84be" stroke-width=".9"/>
<path d="M7.400 2.900l3.200 3.100-3.200 3.100-3.200-3.100z" fill="#eeb04a" stroke="#a8701c" stroke-width=".9"/>
<circle cx="9.700" cy="10.400" r="2.600" fill="#f39090" stroke="#c24a4a" stroke-width=".9"/></svg><span class="t g" style="left:124.9px;top:240px;letter-spacing:0.537px">ProgressBarPainter.java</span>
<svg style="position:absolute;left:98.9px;top:261.4px;overflow:visible" width="14.2" height="16" viewBox="0 0 14.2 16" ><defs><linearGradient id="jf4" x1="0" y1="0" x2="0" y2="1"><stop offset="0" stop-color="#c3cedb"/><stop offset=".75" stop-color="#f4f6f9"/><stop offset="1" stop-color="#ffffff"/></linearGradient></defs>
<path d="M.6 .6h9.200l3.800 3.800V15.400H.6z" fill="url(#jf4)" stroke="#7b8595" stroke-width="1.100" stroke-linejoin="round"/>
<path d="M.6 15.500h13" stroke="#56606f" stroke-width="1.200"/>
<path d="M9.800 .8v3.600h3.600z" fill="#ffffff" stroke="#8b95a5" stroke-width=".7" stroke-linejoin="round"/>
<rect x="2.400" y="8.300" width="5.300" height="4" fill="#a4cdf0" stroke="#4a84be" stroke-width=".9"/>
<path d="M7.400 2.900l3.200 3.100-3.200 3.100-3.200-3.100z" fill="#eeb04a" stroke="#a8701c" stroke-width=".9"/>
<circle cx="9.700" cy="10.400" r="2.600" fill="#f39090" stroke="#c24a4a" stroke-width=".9"/></svg><span class="t g" style="left:124.9px;top:260px;letter-spacing:0.447px">SplashScreen.java</span>
<svg style="position:absolute;left:98.9px;top:281.4px;overflow:visible" width="14.2" height="16" viewBox="0 0 14.2 16" ><defs><linearGradient id="jf5" x1="0" y1="0" x2="0" y2="1"><stop offset="0" stop-color="#c3cedb"/><stop offset=".75" stop-color="#f4f6f9"/><stop offset="1" stop-color="#ffffff"/></linearGradient></defs>
<path d="M.6 .6h9.200l3.800 3.800V15.400H.6z" fill="url(#jf5)" stroke="#7b8595" stroke-width="1.100" stroke-linejoin="round"/>
<path d="M.6 15.500h13" stroke="#56606f" stroke-width="1.200"/>
<path d="M9.800 .8v3.600h3.600z" fill="#ffffff" stroke="#8b95a5" stroke-width=".7" stroke-linejoin="round"/>
<rect x="2.400" y="8.300" width="5.300" height="4" fill="#a4cdf0" stroke="#4a84be" stroke-width=".9"/>
<path d="M7.400 2.900l3.200 3.100-3.200 3.100-3.200-3.100z" fill="#eeb04a" stroke="#a8701c" stroke-width=".9"/>
<circle cx="9.700" cy="10.400" r="2.600" fill="#f39090" stroke="#c24a4a" stroke-width=".9"/></svg><span class="t g" style="left:124.9px;top:280px;letter-spacing:0.447px">SplashScreenDrawer.java</span>
<svg style="position:absolute;left:76.39999999999999px;top:302.2px;overflow:visible" width="17" height="16" viewBox="0 0 17 16" ><defs><linearGradient id="pk1" x1="0" y1="0" x2="0" y2="1"><stop offset="0" stop-color="#f6e6ac"/><stop offset=".3" stop-color="#ecc964"/><stop offset="1" stop-color="#d9ac3e"/></linearGradient></defs>
<path d="M1.200 2.600Q1.200 .8 3 .8H14Q15.800 .8 15.800 2.600V14.600H1.200z" fill="url(#pk1)" stroke="#8c6a1c" stroke-width="1.100" stroke-linejoin="round"/>
<path d="M1.200 14.800h14.600" stroke="#6e5010" stroke-width="1.300"/>
<path d="M8.500 .8v14" stroke="#a07c26" stroke-width="1"/><path d="M1.500 4.600h14M1.500 9.600h14" stroke="#c9a040" stroke-width=".8"/>
<rect x="10.600" y="5.800" width="3.800" height="1.800" fill="#fffbe8"/><path d="M2.500 2.600h5M9.500 2.600h5" stroke="#fdf4cc" stroke-width="1.400"/></svg><svg style="position:absolute;left:94.0px;top:309.4px;overflow:visible" width="7" height="11" viewBox="0 0 7 11" ><rect x=".6" y="1.500" width="5.400" height="8.400" rx="1.800" fill="#3f8fea" stroke="#1d5fc0" stroke-width="1"/><path d="M2.300 4.200h2.400M2.300 4.200v4" stroke="#fff" stroke-width="1.100" fill="none"/></svg><svg style="position:absolute;left:57.099999999999994px;top:305.5px;overflow:visible" width="14" height="13" viewBox="0 0 14 13" ><circle cx="4" cy="4" r="2.500" fill="#fff" stroke="#4a72b5" stroke-width="1.700"/><path d="M4 6.800v4.400" stroke="#4a72b5" stroke-width="2"/><path d="M7.200 4h5.500" stroke="#bccfe8" stroke-width="1.200"/></svg><span class="t" style="left:102.6px;top:300px;letter-spacing:0.292px">com.blogspot.code4lifevn.tasks</span>
<svg style="position:absolute;left:98.9px;top:321.4px;overflow:visible" width="14.2" height="16" viewBox="0 0 14.2 16" ><defs><linearGradient id="jf6" x1="0" y1="0" x2="0" y2="1"><stop offset="0" stop-color="#c3cedb"/><stop offset=".75" stop-color="#f4f6f9"/><stop offset="1" stop-color="#ffffff"/></linearGradient></defs>
<path d="M.6 .6h9.200l3.800 3.800V15.400H.6z" fill="url(#jf6)" stroke="#7b8595" stroke-width="1.100" stroke-linejoin="round"/>
<path d="M.6 15.500h13" stroke="#56606f" stroke-width="1.200"/>
<path d="M9.800 .8v3.600h3.600z" fill="#ffffff" stroke="#8b95a5" stroke-width=".7" stroke-linejoin="round"/>
<rect x="2.400" y="8.300" width="5.300" height="4" fill="#a4cdf0" stroke="#4a84be" stroke-width=".9"/>
<path d="M7.400 2.900l3.200 3.100-3.200 3.100-3.200-3.100z" fill="#eeb04a" stroke="#a8701c" stroke-width=".9"/>
<circle cx="9.700" cy="10.400" r="2.600" fill="#f39090" stroke="#c24a4a" stroke-width=".9"/></svg><span class="t g" style="left:124.9px;top:320px;letter-spacing:0.228px">CheckConfigFileExecutor.java</span>
<svg style="position:absolute;left:98.9px;top:341.4px;overflow:visible" width="14.2" height="16" viewBox="0 0 14.2 16" ><defs><linearGradient id="jf7" x1="0" y1="0" x2="0" y2="1"><stop offset="0" stop-color="#c3cedb"/><stop offset=".75" stop-color="#f4f6f9"/><stop offset="1" stop-color="#ffffff"/></linearGradient></defs>
<path d="M.6 .6h9.200l3.800 3.800V15.400H.6z" fill="url(#jf7)" stroke="#7b8595" stroke-width="1.100" stroke-linejoin="round"/>
<path d="M.6 15.500h13" stroke="#56606f" stroke-width="1.200"/>
<path d="M9.800 .8v3.600h3.600z" fill="#ffffff" stroke="#8b95a5" stroke-width=".7" stroke-linejoin="round"/>
<rect x="2.400" y="8.300" width="5.300" height="4" fill="#a4cdf0" stroke="#4a84be" stroke-width=".9"/>
<path d="M7.400 2.900l3.200 3.100-3.200 3.100-3.200-3.100z" fill="#eeb04a" stroke="#a8701c" stroke-width=".9"/>
<circle cx="9.700" cy="10.400" r="2.600" fill="#f39090" stroke="#c24a4a" stroke-width=".9"/></svg><span class="t g" style="left:124.9px;top:340px;letter-spacing:0.27px">CheckDatabaseExecutor.java</span>
<svg style="position:absolute;left:98.9px;top:361.4px;overflow:visible" width="14.2" height="16" viewBox="0 0 14.2 16" ><defs><linearGradient id="jf8" x1="0" y1="0" x2="0" y2="1"><stop offset="0" stop-color="#c3cedb"/><stop offset=".75" stop-color="#f4f6f9"/><stop offset="1" stop-color="#ffffff"/></linearGradient></defs>
<path d="M.6 .6h9.200l3.800 3.800V15.400H.6z" fill="url(#jf8)" stroke="#7b8595" stroke-width="1.100" stroke-linejoin="round"/>
<path d="M.6 15.500h13" stroke="#56606f" stroke-width="1.200"/>
<path d="M9.800 .8v3.600h3.600z" fill="#ffffff" stroke="#8b95a5" stroke-width=".7" stroke-linejoin="round"/>
<rect x="2.400" y="8.300" width="5.300" height="4" fill="#a4cdf0" stroke="#4a84be" stroke-width=".9"/>
<path d="M7.400 2.900l3.200 3.100-3.200 3.100-3.200-3.100z" fill="#eeb04a" stroke="#a8701c" stroke-width=".9"/>
<circle cx="9.700" cy="10.400" r="2.600" fill="#f39090" stroke="#c24a4a" stroke-width=".9"/></svg><span class="t g" style="left:124.9px;top:360px;letter-spacing:0.382px">ITaskExcutor.java</span>
<svg style="position:absolute;left:98.9px;top:381.4px;overflow:visible" width="14.2" height="16" viewBox="0 0 14.2 16" ><defs><linearGradient id="jf9" x1="0" y1="0" x2="0" y2="1"><stop offset="0" stop-color="#c3cedb"/><stop offset=".75" stop-color="#f4f6f9"/><stop offset="1" stop-color="#ffffff"/></linearGradient></defs>
<path d="M.6 .6h9.200l3.800 3.800V15.400H.6z" fill="url(#jf9)" stroke="#7b8595" stroke-width="1.100" stroke-linejoin="round"/>
<path d="M.6 15.500h13" stroke="#56606f" stroke-width="1.200"/>
<path d="M9.800 .8v3.600h3.600z" fill="#ffffff" stroke="#8b95a5" stroke-width=".7" stroke-linejoin="round"/>
<rect x="2.400" y="8.300" width="5.300" height="4" fill="#a4cdf0" stroke="#4a84be" stroke-width=".9"/>
<path d="M7.400 2.900l3.200 3.100-3.200 3.100-3.200-3.100z" fill="#eeb04a" stroke="#a8701c" stroke-width=".9"/>
<circle cx="9.700" cy="10.400" r="2.600" fill="#f39090" stroke="#c24a4a" stroke-width=".9"/></svg><span class="t g" style="left:124.9px;top:380px;letter-spacing:0.298px">PrepareWorkSpaceExecutor.java</span>
<svg style="position:absolute;left:54.3px;top:402px;overflow:visible" width="16" height="16" viewBox="0 0 16 16" ><defs><linearGradient id="lb1" x1="0" y1="0" x2="0" y2="1"><stop offset="0" stop-color="#ffffff"/><stop offset="1" stop-color="#b8cde6"/></linearGradient></defs>
<path d="M.5 14.500v-10h10v-2h5v12z" fill="url(#lb1)" stroke="#555" stroke-width="1"/>
<rect x="8" y="5" width="7" height="2.600" fill="#8a8a8a" stroke="#444" stroke-width=".6"/>
<rect x="8" y="8" width="7" height="2.600" fill="#c05a4a" stroke="#444" stroke-width=".6"/>
<rect x="8" y="11" width="7" height="2.600" fill="#6a7a9a" stroke="#444" stroke-width=".6"/></svg><svg style="position:absolute;left:34.8px;top:405.5px;overflow:visible" width="14" height="13" viewBox="0 0 14 13" ><circle cx="4" cy="4" r="2.500" fill="#fff" stroke="#4a72b5" stroke-width="1.700"/><path d="M6.800 4h4.800" stroke="#4a72b5" stroke-width="2"/></svg><span class="t" style="left:80.3px;top:400px;letter-spacing:0.255px">Libraries</span>
<div class="panel" style="left:7px;top:574px;width:393.4px;height:472px;"></div>
<span class="t" style="left:13.4px;top:576.05px;letter-spacing:0.33px;">main - Navigator</span>
<svg style="position:absolute;left:129px;top:581.6px;overflow:visible" width="8.6" height="8.6" viewBox="0 0 8.6 8.6" ><path d="M.5 .5l7.6 7.6M8.1 .5l-7.6 7.6" stroke="#111" stroke-width="1.4"/></svg>
<div class="sep" style="left:142px;top:575px;width:1.1px;height:18.6px;"></div>
<div style="left:142px;top:592.6px;width:257.4px;height:1.1px;background:#8e8e8e"></div>
<div style="left:8px;top:593.7px;width:391.4px;height:3.4px;background:#f7f7f7"></div>
<svg style="position:absolute;left:379px;top:581px;overflow:visible" width="11" height="9" viewBox="0 0 11 9" ><rect x=".5" y=".5" width="10" height="8" fill="#f4f4f4" stroke="#3a3a3a" stroke-width="1.200"/><rect x="2.500" y="5.500" width="5" height="1.800" fill="#111"/></svg>
<div style="left:7.6px;top:597.6px;width:190.6px;height:31px;border:1.200px solid #6f8db5;background:#eaeaea;box-shadow:inset 0 0 0 1px #cddbec;"></div>
<div style="left:176.4px;top:598.8px;width:20.6px;height:28.6px;background:linear-gradient(#f6f9fc,#c5d7eb);border-left:1px solid #7d9cc4;"></div>
<svg style="position:absolute;left:181.5px;top:610.5px;overflow:visible" width="11" height="7" viewBox="0 0 11 7" ><path d="M0 0h11L5.500 6.500z" fill="#111"/></svg>
<span class="t" style="left:11px;top:603.3px;">Members</span>
<div style="left:202px;top:600.4px;width:159.6px;height:25.6px;border:1.200px solid #aabfd9;background:#ececec;box-shadow:inset 0 0 0 1px #dbe5f1;"></div>
<div style="left:339.6px;top:601.6px;width:21px;height:23.2px;background:#e9edf2;border-left:1px solid #b7c7dc;"></div>
<svg style="position:absolute;left:345px;top:610.5px;overflow:visible" width="10" height="6" viewBox="0 0 10 6" ><path d="M0 0h10L5 5.500z" fill="#a8c4e6"/></svg>
<span class="t" style="left:206px;top:603.900px;color:#b3c5de;letter-spacing:.05px">&lt;empty&gt;</span>
<div style="left:362.4px;top:598px;width:29.8px;height:30.2px;border:1.300px solid #9c9c9c;background:#efefef;box-shadow:inset 0 0 0 1.200px #fbfbfb;"></div>
<svg style="position:absolute;left:368.2px;top:604.4px;overflow:visible" width="19" height="19" viewBox="0 0 19 19" ><defs><linearGradient id="nf8" x1="0" y1="0" x2="0" y2="1"><stop offset="0" stop-color="#ffffff"/><stop offset="1" stop-color="#cfdcea"/></linearGradient>
<linearGradient id="nf9" x1="0" y1="0" x2="1" y2="0"><stop offset="0" stop-color="#ffffff"/><stop offset=".45" stop-color="#dfe8f2"/><stop offset=".5" stop-color="#8fa6c0"/><stop offset=".55" stop-color="#dfe8f2"/><stop offset="1" stop-color="#ffffff"/></linearGradient></defs>
<rect x=".6" y=".6" width="17.200" height="13.800" fill="url(#nf8)" stroke="#55677a" stroke-width="1.200"/>
<rect x="1.200" y="1.200" width="16" height="3.400" fill="#6f92b6"/><path d="M2.500 2.500h9" stroke="#a9c2da" stroke-width="1"/><path d="M12.500 2.500h3.500" stroke="#e6eef6" stroke-width="1.200"/>
<path d="M6.500 7.800c2.200-1.200 4.200-.8 5.800.4 1.600-1.200 3.600-1.600 5.800-.4v9.400c-2.200-1-4.200-.6-5.800.8-1.600-1.400-3.600-1.800-5.800-.8z" fill="url(#nf9)" stroke="#274666" stroke-width="1.300" stroke-linejoin="round"/></svg>
<div style="left:8px;top:629px;width:391.4px;height:381.6px;background:#fff"></div>
<svg style="position:absolute;left:12.5px;top:635.5px;overflow:visible" width="14" height="13" viewBox="0 0 14 13" ><circle cx="4" cy="4" r="2.500" fill="#fff" stroke="#4a72b5" stroke-width="1.700"/><path d="M4 6.800v4.400" stroke="#4a72b5" stroke-width="2"/><path d="M7.200 4h5.500" stroke="#bccfe8" stroke-width="1.200"/></svg>
<svg style="position:absolute;left:30.6px;top:631px;overflow:visible" width="19.6" height="17.4" viewBox="0 0 18 16" ><rect x="1" y="8" width="9" height="7" fill="#9cc4ea" stroke="#4a78b0" stroke-width=".9"/>
<path d="M8 1l5.500 4.500L8 10 2.500 5.500z" fill="#f1c774" stroke="#b08020" stroke-width=".9"/>
<circle cx="12.500" cy="11.500" r="4" fill="#f29a9a" stroke="#c84a4a" stroke-width=".9"/></svg>
<span class="t" style="left:58px;top:630.200px;letter-spacing:.18px">StartApp</span>
<div style="left:35.6px;top:648px;width:1.2px;height:12px;background:#b9cce6"></div>
<div style="left:35.6px;top:659.4px;width:10px;height:1.2px;background:#b9cce6"></div>
<svg style="position:absolute;left:58.5px;top:654px;overflow:visible" width="12" height="12" viewBox="0 0 12 12" ><circle cx="6" cy="6" r="5.300" fill="#f29a9a" stroke="#c84a4a" stroke-width="1"/><rect x="5" y="1" width="2" height="10" fill="#f7c9c9" stroke="#c84a4a" stroke-width=".6"/></svg>
<div style="left:79px;top:649.6px;width:124px;height:19.2px;background:#b8cfe5"></div>
<span class="t" style="left:80.3px;top:650.400px;letter-spacing:.28px">main(<span style="color:#6a6a6a">String[]</span> args)</span>
<div style="left:8px;top:1009.6px;width:391.4px;height:1px;background:#b9cde5"></div>
<svg style="position:absolute;left:197.5px;top:1010.5px;overflow:visible" width="10" height="5" viewBox="0 0 10 5" ><path d="M0 0h10L5 4.500z" fill="#bcd0ea"/></svg>
<div class="btn" style="left:13.2px;top:1018px;width:30px;height:21.4px;"></div>
<svg style="position:absolute;left:20.2px;top:1020.7px;overflow:visible" width="17" height="17" viewBox="0 0 17 17" ><circle cx="5" cy="3" r="2.300" fill="#f1c774" stroke="#b08020" stroke-width=".6"/><circle cx="10.500" cy="5" r="2.100" fill="#f1c774" stroke="#b08020" stroke-width=".6"/>
<path d="M1 6h8v5H1zM7 8h7.500v4H7z" fill="#f29a9a" stroke="#c84a4a" stroke-width=".6"/>
<path d="M3 11v5M6.500 11v5M10 12v4M13 12v4" stroke="#4a9ae0" stroke-width="1.800"/><path d="M3 15.500v.5M6.500 15.500v.5M10 15.500v.5M13 15.500v.5" stroke="#123" stroke-width="1.800"/></svg>
<div class="btn on" style="left:48px;top:1018px;width:30px;height:21.4px;"></div>
<svg style="position:absolute;left:55px;top:1020.7px;overflow:visible" width="17" height="17" viewBox="0 0 17 17" ><rect x="2.500" y="3.500" width="10" height="10" fill="#a8cdf0" stroke="#3f78b8" stroke-width="1"/></svg>
<div class="btn on" style="left:82px;top:1018px;width:30px;height:21.4px;"></div>
<svg style="position:absolute;left:89px;top:1020.7px;overflow:visible" width="17" height="17" viewBox="0 0 17 17" ><rect x="6.500" y="2.300" width="2.800" height="12.400" fill="#cfdcec" stroke="#6f86a6" stroke-width="1"/></svg>
<div class="btn on" style="left:116.4px;top:1018px;width:30px;height:21.4px;"></div>
<svg style="position:absolute;left:123.4px;top:1020.7px;overflow:visible" width="17" height="17" viewBox="0 0 17 17" ><path d="M4 7.500V5c0-4.500 8-4.500 8 0v2.500" fill="none" stroke="#8a8a8a" stroke-width="2.200"/>
<rect x="1.500" y="7" width="13" height="9.500" rx=".8" fill="#e6b860" stroke="#9a7420" stroke-width="1"/><path d="M2 9.500h12M2 11.800h12M2 14.100h12" stroke="#b88a34" stroke-width=".9"/></svg>
<div class="btn on" style="left:151.2px;top:1018px;width:30px;height:21.4px;"></div>
<svg style="position:absolute;left:158.2px;top:1020.7px;overflow:visible" width="17" height="17" viewBox="0 0 17 17" ><rect x=".5" y="8" width="9.500" height="7.500" fill="#9cc4ea" stroke="#4a78b0" stroke-width=".9"/>
<path d="M7.500 .2l5.800 5-5.800 5-5.800-5z" fill="#f1c774" stroke="#b08020" stroke-width=".9"/>
<circle cx="12.500" cy="12" r="4.200" fill="#f29a9a" stroke="#c84a4a" stroke-width=".9"/></svg>
<div class="btn" style="left:193.2px;top:1018px;width:30px;height:21.4px;"></div>
<svg style="position:absolute;left:200.2px;top:1020.7px;overflow:visible" width="17" height="17" viewBox="0 0 17 17" ><rect x="1.500" y="3.500" width="8" height="11" fill="#f6e2b0" stroke="#b08020" stroke-width="1.200"/>
<rect x="3.500" y="8" width="6" height="6" fill="#9cc4ea" stroke="#4a78b0" stroke-width=".8"/>
<path d="M8 1.500l4 3.500-4 3.500-4-3.500z" fill="#f1c774" stroke="#b08020" stroke-width=".8"/>
<circle cx="12" cy="9.500" r="3.300" fill="#f29a9a" stroke="#c84a4a" stroke-width=".8"/></svg>
<div class="btn on" style="left:234.8px;top:1018px;width:30px;height:21.4px;"></div>
<svg style="position:absolute;left:241.8px;top:1020.7px;overflow:visible" width="17" height="17" viewBox="0 0 17 17" ><path d="M3.500 1.500v7.500h-2.500l3.800 5.500 3.800-5.500h-2.500v-7.500z" fill="#d4dce6" stroke="#6f7f92" stroke-width=".9"/>
<text x="9" y="7.500" font-family="DejaVu Sans" font-weight="bold" font-size="7.500" fill="#fff" stroke="#222" stroke-width=".7" paint-order="stroke">A</text>
<text x="8.500" y="15.500" font-family="DejaVu Sans" font-weight="bold" font-size="8" fill="#d89020" stroke="#7a4a00" stroke-width=".3">Z</text></svg>
<div class="btn" style="left:269.8px;top:1018px;width:30px;height:21.4px;"></div>
<svg style="position:absolute;left:276.8px;top:1020.7px;overflow:visible" width="17" height="17" viewBox="0 0 17 17" ><path d="M3.500 1.500v7.500h-2.500l3.800 5.500 3.800-5.500h-2.500v-7.500z" fill="#eef2f6" stroke="#4f6076" stroke-width="1"/><path d="M9.5 2H16" stroke="#444" stroke-width="1.2"/><path d="M9.5 4.5H16" stroke="#444" stroke-width="1.2"/><path d="M9.5 7H16" stroke="#444" stroke-width="1.2"/><path d="M9.5 9.5H16" stroke="#444" stroke-width="1.2"/><path d="M9.5 12H16" stroke="#444" stroke-width="1.2"/><path d="M9.5 14.5H14" stroke="#222" stroke-width="1.4"/></svg>
<div class="panel" style="left:405px;top:96px;width:1507.4px;height:659.4px;"></div>
<div style="left:406px;top:122.4px;width:1505.4px;height:1.2px;background:#e8f0f8"></div>
<div style="left:406px;top:123.4px;width:1505.4px;height:3.4px;background:linear-gradient(#b4cbe4 70%,#dfe9f4)"></div>
<div style="left:406px;top:121.3px;width:1505.4px;height:1.1px;background:#8a9cb2"></div>
<div style="left:405.6px;top:102.4px;width:44px;height:19px;background:#efefef;border:1px solid #6d86a6;border-left:none;border-bottom:none"></div>
<div style="left:406px;top:121.4px;width:44px;height:1.1px;background:#fbfbfb"></div>
<span class="t" style="left:422px;top:101.2px;color:#444;width:27px;overflow:hidden;letter-spacing:.4px"><span style="color:#8a96aa">&hellip;</span>va</span>
<svg style="position:absolute;left:449px;top:99px;overflow:visible" width="142" height="28" viewBox="0 0 142 28"><path d="M1 27.400V7.500L7 1H140V27.400z" fill="#b8cfe5"/><path d="M1 23V7.500L7 1H140V22.500" fill="none" stroke="#6d86a6" stroke-width="1.200"/></svg>
<svg style="position:absolute;left:452.8px;top:106.6px;overflow:visible" width="5" height="14" viewBox="0 0 5 14" ><path d="M3 1.0l-2.500 2.500" stroke="#fff" stroke-width="1.100"/><path d="M4 1.6l-2.500 2.500" stroke="#9ab3d2" stroke-width=".9"/><path d="M3 4.2l-2.500 2.500" stroke="#fff" stroke-width="1.100"/><path d="M4 4.800000000000001l-2.500 2.500" stroke="#9ab3d2" stroke-width=".9"/><path d="M3 7.4l-2.500 2.500" stroke="#fff" stroke-width="1.100"/><path d="M4 8.0l-2.500 2.500" stroke="#9ab3d2" stroke-width=".9"/><path d="M3 10.600000000000001l-2.500 2.500" stroke="#fff" stroke-width="1.100"/><path d="M4 11.200000000000001l-2.500 2.500" stroke="#9ab3d2" stroke-width=".9"/></svg>
<svg style="position:absolute;left:462px;top:102.4px;overflow:visible" width="14.2" height="16" viewBox="0 0 14.2 16" ><defs><linearGradient id="jf10" x1="0" y1="0" x2="0" y2="1"><stop offset="0" stop-color="#c3cedb"/><stop offset=".75" stop-color="#f4f6f9"/><stop offset="1" stop-color="#ffffff"/></linearGradient></defs>
<path d="M.6 .6h9.200l3.800 3.800V15.400H.6z" fill="url(#jf10)" stroke="#7b8595" stroke-width="1.100" stroke-linejoin="round"/>
<path d="M.6 15.500h13" stroke="#56606f" stroke-width="1.200"/>
<path d="M9.800 .8v3.600h3.600z" fill="#ffffff" stroke="#8b95a5" stroke-width=".7" stroke-linejoin="round"/>
<rect x="2.400" y="8.300" width="5.300" height="4" fill="#a4cdf0" stroke="#4a84be" stroke-width=".9"/>
<path d="M7.400 2.900l3.200 3.100-3.200 3.100-3.200-3.100z" fill="#eeb04a" stroke="#a8701c" stroke-width=".9"/>
<circle cx="9.700" cy="10.400" r="2.600" fill="#f39090" stroke="#c24a4a" stroke-width=".9"/><path d="M9.800 7.800l6.200 4-6.200 4z" fill="#8ee05a" stroke="#2a9a14" stroke-width="1" stroke-linejoin="round"/></svg>
<span class="t g" style="left:483.6px;top:100.800px;letter-spacing:0.12px">StartApp.java</span>
<svg style="position:absolute;left:577.4px;top:108.8px;overflow:visible" width="7" height="7" viewBox="0 0 7 7" ><path d="M.5 .5l6 6M6.5 .5l-6 6" stroke="#111" stroke-width="1.9"/></svg>
<svg style="position:absolute;left:590px;top:101.6px;overflow:visible" width="219" height="21" viewBox="0 0 219 21"><path d="M0 6.500L6 .8H218V19.700H0z" fill="#f3f3f3"/><path d="M0 6.500L6 .8H218" fill="none" stroke="#6d86a6" stroke-width="1.200"/><path d="M218 .8V20" stroke="#6d86a6" stroke-width="1"/></svg>
<svg style="position:absolute;left:600px;top:104px;overflow:visible" width="14.2" height="16" viewBox="0 0 14.2 16" ><defs><linearGradient id="jf11" x1="0" y1="0" x2="0" y2="1"><stop offset="0" stop-color="#c3cedb"/><stop offset=".75" stop-color="#f4f6f9"/><stop offset="1" stop-color="#ffffff"/></linearGradient></defs>
<path d="M.6 .6h9.200l3.800 3.800V15.400H.6z" fill="url(#jf11)" stroke="#7b8595" stroke-width="1.100" stroke-linejoin="round"/>
<path d="M.6 15.500h13" stroke="#56606f" stroke-width="1.200"/>
<path d="M9.800 .8v3.600h3.600z" fill="#ffffff" stroke="#8b95a5" stroke-width=".7" stroke-linejoin="round"/>
<rect x="2.400" y="8.300" width="5.300" height="4" fill="#a4cdf0" stroke="#4a84be" stroke-width=".9"/>
<path d="M7.400 2.900l3.200 3.100-3.200 3.100-3.200-3.100z" fill="#eeb04a" stroke="#a8701c" stroke-width=".9"/>
<circle cx="9.700" cy="10.400" r="2.600" fill="#f39090" stroke="#c24a4a" stroke-width=".9"/></svg>
<span class="t g" style="left:621.6px;top:100.800px;letter-spacing:0.447px">SplashScreenDrawer.java</span>
<svg style="position:absolute;left:795.8px;top:109px;overflow:visible" width="7" height="7" viewBox="0 0 7 7" ><path d="M.5 .5l6 6M6.5 .5l-6 6" stroke="#111" stroke-width="1.9"/></svg>
<svg style="position:absolute;left:809px;top:101.6px;overflow:visible" width="207.60000000000002" height="21" viewBox="0 0 207.60000000000002 21"><path d="M0 6.500L6 .8H206.60000000000002V19.700H0z" fill="#f3f3f3"/><path d="M0 6.500L6 .8H206.60000000000002" fill="none" stroke="#6d86a6" stroke-width="1.200"/><path d="M206.60000000000002 .8V20" stroke="#6d86a6" stroke-width="1"/></svg>
<svg style="position:absolute;left:819.6px;top:104px;overflow:visible" width="14.2" height="16" viewBox="0 0 14.2 16" ><defs><linearGradient id="jf12" x1="0" y1="0" x2="0" y2="1"><stop offset="0" stop-color="#c3cedb"/><stop offset=".75" stop-color="#f4f6f9"/><stop offset="1" stop-color="#ffffff"/></linearGradient></defs>
<path d="M.6 .6h9.200l3.800 3.800V15.400H.6z" fill="url(#jf12)" stroke="#7b8595" stroke-width="1.100" stroke-linejoin="round"/>
<path d="M.6 15.500h13" stroke="#56606f" stroke-width="1.200"/>
<path d="M9.800 .8v3.600h3.600z" fill="#ffffff" stroke="#8b95a5" stroke-width=".7" stroke-linejoin="round"/>
<rect x="2.400" y="8.300" width="5.300" height="4" fill="#a4cdf0" stroke="#4a84be" stroke-width=".9"/>
<path d="M7.400 2.900l3.200 3.100-3.200 3.100-3.200-3.100z" fill="#eeb04a" stroke="#a8701c" stroke-width=".9"/>
<circle cx="9.700" cy="10.400" r="2.600" fill="#f39090" stroke="#c24a4a" stroke-width=".9"/></svg>
<span class="t g" style="left:840px;top:100.800px;letter-spacing:0.537px">ProgressBarPainter.java</span>
<svg style="position:absolute;left:1005.8px;top:109px;overflow:visible" width="7" height="7" viewBox="0 0 7 7" ><path d="M.5 .5l6 6M6.5 .5l-6 6" stroke="#111" stroke-width="1.9"/></svg>
<svg style="position:absolute;left:1016.6px;top:101.6px;overflow:visible" width="165.39999999999998" height="21" viewBox="0 0 165.39999999999998 21"><path d="M0 6.500L6 .8H164.39999999999998V19.700H0z" fill="#f3f3f3"/><path d="M0 6.500L6 .8H164.39999999999998" fill="none" stroke="#6d86a6" stroke-width="1.200"/><path d="M164.39999999999998 .8V20" stroke="#6d86a6" stroke-width="1"/></svg>
<svg style="position:absolute;left:1030.8px;top:104px;overflow:visible" width="14.2" height="16" viewBox="0 0 14.2 16" ><defs><linearGradient id="jf13" x1="0" y1="0" x2="0" y2="1"><stop offset="0" stop-color="#c3cedb"/><stop offset=".75" stop-color="#f4f6f9"/><stop offset="1" stop-color="#ffffff"/></linearGradient></defs>
<path d="M.6 .6h9.200l3.800 3.800V15.400H.6z" fill="url(#jf13)" stroke="#7b8595" stroke-width="1.100" stroke-linejoin="round"/>
<path d="M.6 15.500h13" stroke="#56606f" stroke-width="1.200"/>
<path d="M9.800 .8v3.600h3.600z" fill="#ffffff" stroke="#8b95a5" stroke-width=".7" stroke-linejoin="round"/>
<rect x="2.400" y="8.300" width="5.300" height="4" fill="#a4cdf0" stroke="#4a84be" stroke-width=".9"/>
<path d="M7.400 2.900l3.200 3.100-3.200 3.100-3.200-3.100z" fill="#eeb04a" stroke="#a8701c" stroke-width=".9"/>
<circle cx="9.700" cy="10.400" r="2.600" fill="#f39090" stroke="#c24a4a" stroke-width=".9"/></svg>
<span class="t g" style="left:1050px;top:100.800px;letter-spacing:0.382px">ITaskExcutor.java</span>
<svg style="position:absolute;left:1171.4px;top:109px;overflow:visible" width="7" height="7" viewBox="0 0 7 7" ><path d="M.5 .5l6 6M6.5 .5l-6 6" stroke="#111" stroke-width="1.9"/></svg>
<svg style="position:absolute;left:1182px;top:101.6px;overflow:visible" width="237.79999999999995" height="21" viewBox="0 0 237.79999999999995 21"><path d="M0 6.500L6 .8H236.79999999999995V19.700H0z" fill="#f3f3f3"/><path d="M0 6.500L6 .8H236.79999999999995" fill="none" stroke="#6d86a6" stroke-width="1.200"/><path d="M236.79999999999995 .8V20" stroke="#6d86a6" stroke-width="1"/></svg>
<svg style="position:absolute;left:1195px;top:104px;overflow:visible" width="14.2" height="16" viewBox="0 0 14.2 16" ><defs><linearGradient id="jf14" x1="0" y1="0" x2="0" y2="1"><stop offset="0" stop-color="#c3cedb"/><stop offset=".75" stop-color="#f4f6f9"/><stop offset="1" stop-color="#ffffff"/></linearGradient></defs>
<path d="M.6 .6h9.200l3.800 3.800V15.400H.6z" fill="url(#jf14)" stroke="#7b8595" stroke-width="1.100" stroke-linejoin="round"/>
<path d="M.6 15.500h13" stroke="#56606f" stroke-width="1.200"/>
<path d="M9.800 .8v3.600h3.600z" fill="#ffffff" stroke="#8b95a5" stroke-width=".7" stroke-linejoin="round"/>
<rect x="2.400" y="8.300" width="5.300" height="4" fill="#a4cdf0" stroke="#4a84be" stroke-width=".9"/>
<path d="M7.400 2.900l3.200 3.100-3.200 3.100-3.200-3.100z" fill="#eeb04a" stroke="#a8701c" stroke-width=".9"/>
<circle cx="9.700" cy="10.400" r="2.600" fill="#f39090" stroke="#c24a4a" stroke-width=".9"/></svg>
<span class="t g" style="left:1216.8px;top:100.800px;letter-spacing:0.27px">CheckDatabaseExecutor.java</span>
<svg style="position:absolute;left:1409px;top:109px;overflow:visible" width="7" height="7" viewBox="0 0 7 7" ><path d="M.5 .5l6 6M6.5 .5l-6 6" stroke="#111" stroke-width="1.9"/></svg>
<svg style="position:absolute;left:1419.8px;top:101.6px;overflow:visible" width="238.60000000000014" height="21" viewBox="0 0 238.60000000000014 21"><path d="M0 6.500L6 .8H237.60000000000014V19.700H0z" fill="#f3f3f3"/><path d="M0 6.500L6 .8H237.60000000000014" fill="none" stroke="#6d86a6" stroke-width="1.200"/><path d="M237.60000000000014 .8V20" stroke="#6d86a6" stroke-width="1"/></svg>
<svg style="position:absolute;left:1432.8px;top:104px;overflow:visible" width="14.2" height="16" viewBox="0 0 14.2 16" ><defs><linearGradient id="jf15" x1="0" y1="0" x2="0" y2="1"><stop offset="0" stop-color="#c3cedb"/><stop offset=".75" stop-color="#f4f6f9"/><stop offset="1" stop-color="#ffffff"/></linearGradient></defs>
<path d="M.6 .6h9.200l3.800 3.800V15.400H.6z" fill="url(#jf15)" stroke="#7b8595" stroke-width="1.100" stroke-linejoin="round"/>
<path d="M.6 15.500h13" stroke="#56606f" stroke-width="1.200"/>
<path d="M9.800 .8v3.600h3.600z" fill="#ffffff" stroke="#8b95a5" stroke-width=".7" stroke-linejoin="round"/>
<rect x="2.400" y="8.300" width="5.300" height="4" fill="#a4cdf0" stroke="#4a84be" stroke-width=".9"/>
<path d="M7.400 2.900l3.200 3.100-3.200 3.100-3.200-3.100z" fill="#eeb04a" stroke="#a8701c" stroke-width=".9"/>
<circle cx="9.700" cy="10.400" r="2.600" fill="#f39090" stroke="#c24a4a" stroke-width=".9"/></svg>
<span class="t g" style="left:1453.8px;top:100.800px;letter-spacing:0.228px">CheckConfigFileExecutor.java</span>
<svg style="position:absolute;left:1647.8px;top:109px;overflow:visible" width="7" height="7" viewBox="0 0 7 7" ><path d="M.5 .5l6 6M6.5 .5l-6 6" stroke="#111" stroke-width="1.9"/></svg>
<svg style="position:absolute;left:1658.4px;top:101.6px;overflow:visible" width="167.5999999999999" height="21" viewBox="0 0 167.5999999999999 21"><path d="M0 6.500L6 .8H166.5999999999999V19.700H0z" fill="#f3f3f3"/><path d="M0 6.500L6 .8H166.5999999999999" fill="none" stroke="#6d86a6" stroke-width="1.200"/></svg>
<svg style="position:absolute;left:1671.6px;top:104px;overflow:visible" width="14.2" height="16" viewBox="0 0 14.2 16" ><defs><linearGradient id="jf16" x1="0" y1="0" x2="0" y2="1"><stop offset="0" stop-color="#c3cedb"/><stop offset=".75" stop-color="#f4f6f9"/><stop offset="1" stop-color="#ffffff"/></linearGradient></defs>
<path d="M.6 .6h9.200l3.800 3.800V15.400H.6z" fill="url(#jf16)" stroke="#7b8595" stroke-width="1.100" stroke-linejoin="round"/>
<path d="M.6 15.500h13" stroke="#56606f" stroke-width="1.200"/>
<path d="M9.800 .8v3.600h3.600z" fill="#ffffff" stroke="#8b95a5" stroke-width=".7" stroke-linejoin="round"/>
<rect x="2.400" y="8.300" width="5.300" height="4" fill="#a4cdf0" stroke="#4a84be" stroke-width=".9"/>
<path d="M7.400 2.900l3.200 3.100-3.200 3.100-3.200-3.100z" fill="#eeb04a" stroke="#a8701c" stroke-width=".9"/>
<circle cx="9.700" cy="10.400" r="2.600" fill="#f39090" stroke="#c24a4a" stroke-width=".9"/></svg>
<span class="t g" style="left:1692.6px;top:100.800px;letter-spacing:0.33px">PrepareWorkSpace&hellip;</span>
<div style="left:1830.2px;top:100px;width:18px;height:17.6px;background:linear-gradient(#ffffff,#cfdff0);border:1px solid #8aa2c2;"></div><svg style="position:absolute;left:1835px;top:103.5px;overflow:visible" width="7" height="11" viewBox="0 0 7 11" ><path d="M6.500 0v11L.5 5.500z" fill="#111"/></svg>
<div style="left:1847.6px;top:100px;width:18px;height:17.6px;background:linear-gradient(#ffffff,#cfdff0);border:1px solid #8aa2c2;"></div><svg style="position:absolute;left:1853.5px;top:103.5px;overflow:visible" width="7" height="11" viewBox="0 0 7 11" ><path d="M.5 0v11l6-5.500z" fill="#111"/></svg>
<div style="left:1868.6px;top:100px;width:18px;height:17.6px;background:linear-gradient(#ffffff,#cfdff0);border:1px solid #8aa2c2;"></div><svg style="position:absolute;left:1872.5px;top:106px;overflow:visible" width="10" height="6" viewBox="0 0 10 6" ><path d="M0 0h10L5 6z" fill="#111"/></svg>
<div style="left:1890px;top:100px;width:18px;height:17.6px;background:linear-gradient(#ffffff,#cfdff0);border:1px solid #8aa2c2;"></div><svg style="position:absolute;left:1894.5px;top:103.5px;overflow:visible" width="9" height="9" viewBox="0 0 9 9" ><rect x=".7" y=".7" width="7.600" height="7.600" fill="#fff" stroke="#111" stroke-width="1.350"/></svg>
<div style="left:406px;top:126.6px;width:1505.4px;height:28px;background:linear-gradient(#fdfdfd,#f1f1f1 45%,#dedede);border-bottom:2.200px solid #a0a0a0;"></div>
<div style="left:406px;top:152.4px;width:1505.4px;height:1px;background:#c4c4c4"></div>
<div style="left:405.8px;top:126.4px;width:67px;height:25.6px;background:#b4cce6;border:1px solid #7f9cc0;"></div>
<span class="t" style="left:417.6px;top:129.900px;color:#223">Source</span>
<div style="left:474px;top:126.4px;width:67.2px;height:25.6px;background:linear-gradient(#f8f8f8,#ececec);border:1px solid #ababab;"></div>
<span class="t" style="left:486px;top:129.900px;color:#223">History</span>
<svg style="position:absolute;left:559.5px;top:132.4px;overflow:visible" width="17" height="16" viewBox="0 0 17 16" ><rect x=".5" y=".5" width="14" height="15" fill="#f2f2f2" stroke="#6e6e6e"/><path d="M2.500 3h3M4 3v10M2.500 13h3" stroke="#222" stroke-width="1" fill="none"/><path d="M6 8l5-4.300v2.500h4.500c1 2 .500 5-2 6.500 .500-1.500 .300-2.700-.500-3.300h-2v2.900z" fill="#f3a640" stroke="#a8610e" stroke-width=".9" stroke-linejoin="round"/></svg>
<svg style="position:absolute;left:587px;top:132.4px;overflow:visible" width="17" height="17" viewBox="0 0 17 17" ><rect x=".5" y=".5" width="13" height="13.500" fill="#f6f6f6" stroke="#6e6e6e"/><rect x="1" y="1" width="12" height="2" fill="#d9e2ee"/><path d="M3 5.500h7M3 7.500h5" stroke="#b0b0b0" stroke-width="1"/><path d="M5.5 11.5l5-4.500v2.800h4.500v3.400h-4.500v2.800z" fill="#f3a640" stroke="#a8610e" stroke-width=".9" stroke-linejoin="round"/></svg>
<svg style="position:absolute;left:610.8px;top:139px;overflow:visible" width="6" height="3.6" viewBox="0 0 6 3.6" ><path d="M0 0h6L3 3.600z" fill="#34445c"/></svg>
<svg style="position:absolute;left:624.5px;top:132.4px;overflow:visible" width="17" height="17" viewBox="0 0 17 17" ><g opacity=".55"><rect x="2.500" y=".5" width="13" height="13.500" fill="#c9c9c9" stroke="#8e8e8e"/><path d="M9 4.500h4M9 6.500h3" stroke="#e0e0e0" stroke-width="1"/><path d="M10.5 11.5l-5-4.500v2.800h-4.500v3.400h4.500v2.800z" fill="#c9b59a" stroke="#a09080" stroke-width=".9" stroke-linejoin="round"/></g></svg>
<svg style="position:absolute;left:649.4px;top:139px;overflow:visible" width="6" height="3.6" viewBox="0 0 6 3.6" ><path d="M0 0h6L3 3.600z" fill="#4a5870"/></svg>
<svg style="position:absolute;left:675.2px;top:132.4px;overflow:visible" width="17" height="16" viewBox="0 0 17 16" ><rect x=".5" y=".5" width="11" height="4" fill="#f1b566" stroke="#b06a14"/><circle cx="8.500" cy="7.500" r="4.600" fill="#d9ecfb" stroke="#333" stroke-width="1.400"/><path d="M12 11l3.500 3.800" stroke="#222" stroke-width="2.300" stroke-linecap="round"/></svg>
<svg style="position:absolute;left:701.6px;top:132.4px;overflow:visible" width="17" height="16" viewBox="0 0 17 16" ><rect x=".5" y=".5" width="11" height="4.500" fill="#f1b566" stroke="#b06a14"/><path d="M4.5 10.5l5.500-5v3h5.500v4h-5.500v3z" fill="#5da2ea" stroke="#1f5fae" stroke-width=".9" stroke-linejoin="round"/></svg>
<svg style="position:absolute;left:728.2px;top:132.4px;overflow:visible" width="17" height="16" viewBox="0 0 17 16" ><rect x="5.500" y=".5" width="11" height="4.500" fill="#f1b566" stroke="#b06a14"/><path d="M12 10.5l-5.500-5v3h-5.500v4h5.500v3z" fill="#5da2ea" stroke="#1f5fae" stroke-width=".9" stroke-linejoin="round"/></svg>
<div style="left:751.2px;top:127.2px;width:25.4px;height:23.8px;background:#b4cce6;border:1px solid #8fb0d8;"></div>
<svg style="position:absolute;left:755px;top:132.4px;overflow:visible" width="17" height="16" viewBox="0 0 17 16" ><rect x=".5" y=".5" width="12" height="6" fill="#f1b566" stroke="#b06a14"/><path d="M1.500 8l2 6.500M13 2l3 4" stroke="#555" stroke-width=".8"/><rect x="4.500" y="7.500" width="12" height="7.500" fill="#c8c8c8" stroke="#555"/><rect x="5" y="8" width="11" height="2.500" fill="#eaeaea"/></svg>
<svg style="position:absolute;left:781px;top:132.4px;overflow:visible" width="17" height="16" viewBox="0 0 17 16" ><rect x=".8" y=".8" width="12.500" height="10.500" fill="none" stroke="#222" stroke-width="1.300" stroke-dasharray="1.500 1.500"/><path d="M11.500 9v7l4-3.500z" fill="#222" stroke="#777" stroke-width=".5"/></svg>
<svg style="position:absolute;left:819.4px;top:132.4px;overflow:visible" width="17" height="16" viewBox="0 0 17 16" ><path d="M6.500 1h8l2.500 2.800-2.500 2.800h-8z" fill="#8ed3e8" stroke="#3a8aa8" stroke-width=".9" stroke-linejoin="round"/><path d="M6 3.500l5 5.500h-3v6.500h-4v-6.500h-3z" fill="#f3a640" stroke="#a8610e" stroke-width=".9" stroke-linejoin="round"/></svg>
<svg style="position:absolute;left:846px;top:132.4px;overflow:visible" width="17" height="16" viewBox="0 0 17 16" ><path d="M6.500 9.500h8l2.500 2.800-2.500 2.800h-8z" fill="#8ed3e8" stroke="#3a8aa8" stroke-width=".9" stroke-linejoin="round"/><path d="M6 12l5-5.500h-3v-6h-4v6h-3z" fill="#f3a640" stroke="#a8610e" stroke-width=".9" stroke-linejoin="round"/></svg>
<svg style="position:absolute;left:872.6px;top:132.4px;overflow:visible" width="17" height="16" viewBox="0 0 17 16" ><path d="M.5 1h7l2.500 2.800-2.500 2.800h-7z" fill="#8ed3e8" stroke="#3a8aa8" stroke-width=".9" stroke-linejoin="round"/><path d="M2.500 8l3 6M10 4.500l3.500 4" stroke="#777" stroke-width=".7"/><path d="M6 9h7l2.500 2.800-2.500 2.800h-7z" fill="#d9d9d9" stroke="#6a6a6a" stroke-width=".9" stroke-linejoin="round"/></svg>
<svg style="position:absolute;left:911px;top:132.4px;overflow:visible" width="17" height="16" viewBox="0 0 17 16" ><path d="M11.5 3.5H16.5" stroke="#555" stroke-width="1.1"/><path d="M11.5 6H16.5" stroke="#555" stroke-width="1.1"/><path d="M11.5 8.5H16.5" stroke="#555" stroke-width="1.1"/><path d="M1.5 11.5H16.5" stroke="#333" stroke-width="1.3"/><path d="M1.5 14.5H16.5" stroke="#333" stroke-width="1.3"/><path d="M.5 5l5-4.500v2.700h5v3.600h-5v2.700z" fill="#5da2ea" stroke="#1f5fae" stroke-width=".9" stroke-linejoin="round"/></svg>
<svg style="position:absolute;left:937.5px;top:132.4px;overflow:visible" width="17" height="16" viewBox="0 0 17 16" ><path d="M11.5 3.5H16.5" stroke="#555" stroke-width="1.1"/><path d="M11.5 6H16.5" stroke="#555" stroke-width="1.1"/><path d="M11.5 8.5H16.5" stroke="#555" stroke-width="1.1"/><path d="M1.5 11.5H16.5" stroke="#333" stroke-width="1.3"/><path d="M1.5 14.5H16.5" stroke="#333" stroke-width="1.3"/><path d="M10.500 5l-5-4.500v2.700h-5v3.600h5v2.700z" fill="#5da2ea" stroke="#1f5fae" stroke-width=".9" stroke-linejoin="round"/></svg>
<svg style="position:absolute;left:977px;top:134.0px;overflow:visible" width="14" height="14" viewBox="0 0 14 14" ><defs><radialGradient id="rc1" cx=".4" cy=".35" r=".7"><stop offset="0" stop-color="#f9a0a0"/><stop offset="1" stop-color="#ea5f5f"/></radialGradient></defs><circle cx="7" cy="7" r="6.300" fill="url(#rc1)" stroke="#d04848" stroke-width=".8"/></svg>
<svg style="position:absolute;left:1003.5px;top:134.0px;overflow:visible" width="14" height="14" viewBox="0 0 14 14" ><defs><linearGradient id="st1" x1="0" y1="0" x2="1" y2="1"><stop offset="0" stop-color="#e6e6e6"/><stop offset="1" stop-color="#a8a8a8"/></linearGradient></defs><rect x=".6" y=".6" width="12.500" height="12.500" fill="url(#st1)" stroke="#7a7a7a" stroke-width="1.100"/></svg>
<svg style="position:absolute;left:1040.4px;top:132.4px;overflow:visible" width="16" height="16" viewBox="0 0 16 16" ><path d="M11 5.5H15" stroke="#444" stroke-width="1.1"/><path d="M11 8H15" stroke="#444" stroke-width="1.1"/><path d="M0.5 10.5H15" stroke="#333" stroke-width="1.2"/><path d="M0.5 13H15" stroke="#333" stroke-width="1.2"/><path d="M0.5 15.5H15" stroke="#333" stroke-width="1.2"/><path d="M1 8.500l3-7.500M4.200 8.500l3-7.500M7.400 8.500l3-7.500" stroke="#1f9a1f" stroke-width="1.900" fill="none"/></svg>
<svg style="position:absolute;left:1066.5px;top:132.4px;overflow:visible" width="16" height="16" viewBox="0 0 16 16" ><path d="M11 3H15" stroke="#222" stroke-width="1.2"/><path d="M11 5.5H15" stroke="#222" stroke-width="1.2"/><path d="M11 8H15" stroke="#222" stroke-width="1.2"/><path d="M0.5 10.5H15" stroke="#222" stroke-width="1.3"/><path d="M0.5 13H15" stroke="#222" stroke-width="1.3"/><path d="M0.5 15.5H15" stroke="#222" stroke-width="1.3"/></svg>
<div style="left:406px;top:154.6px;width:1505.4px;height:600.2px;background:#fff"></div>
<div style="left:406px;top:154.6px;width:30.6px;height:600.2px;background:#e9e8e2;border-right:1px solid #c4c4c0"></div>
<div style="left:467.6px;top:278.0px;width:1429px;height:17.7px;background:#e9effb"></div>
<span class="ln" style="left:406.5px;top:153.80px">1</span>
<span class="code" style="left:467.2px;top:153.80px"><span class="kw">package</span> com.blogspot.code4lifevn.app;</span>
<span class="ln" style="left:406.5px;top:171.50px">2</span>
<span class="ln" style="left:406.5px;top:189.20px">3</span>
<span class="code" style="left:467.2px;top:189.20px"><span class="cm">/**</span></span>
<span class="ln" style="left:406.5px;top:206.90px">4</span>
<span class="code" style="left:467.2px;top:206.90px"><span class="cm"> *</span></span>
<span class="ln" style="left:406.5px;top:224.60px">5</span>
<span class="code" style="left:467.2px;top:224.60px"><span class="cm"> * <b style="color:#8a8a8a">@author</b> code4lifevn</span></span>
<span class="ln" style="left:406.5px;top:242.30px">6</span>
<span class="code" style="left:467.2px;top:242.30px"><span class="cm"> */</span></span>
<span class="ln" style="left:406.5px;top:260.00px">7</span>
<span class="code" style="left:467.2px;top:260.00px"><span class="kw">public</span> <span class="kw">class</span> <b>StartApp</b> {</span>
<span class="ln" style="left:406.5px;top:277.70px">8</span>
<span class="ln" style="left:406.5px;top:295.40px">9</span>
<span class="code" style="left:467.2px;top:295.40px">    <span class="kw">public</span> <span class="kw">static</span> <span class="kw">void</span> <b>main</b>(String[] args) {</span>
<span class="ln" style="left:406.5px;top:313.10px">10</span>
<span class="ln" style="left:406.5px;top:330.80px">11</span>
<span class="code" style="left:467.2px;top:330.80px">    }</span>
<span class="ln" style="left:406.5px;top:348.50px">12</span>
<span class="code" style="left:467.2px;top:348.50px">}</span>
<span class="ln" style="left:406.5px;top:366.20px">13</span>
<div style="left:445.4px;top:193.5px;width:9.8px;height:9.8px;background:#fff;border:1.200px solid #5a5a5a;"></div><div style="left:447.8px;top:197.8px;width:5px;height:1.2px;background:#5a5a5a"></div><div style="left:449.7px;top:203.3px;width:1.2px;height:49.89999999999999px;background:#5a5a5a"></div><div style="left:449.7px;top:252.1px;width:5.6px;height:1.2px;background:#5a5a5a"></div>
<div style="left:445.4px;top:299.7px;width:9.8px;height:9.8px;background:#fff;border:1.200px solid #5a5a5a;"></div><div style="left:447.8px;top:304.0px;width:5px;height:1.2px;background:#5a5a5a"></div><div style="left:449.7px;top:309.5px;width:1.2px;height:32.20000000000003px;background:#5a5a5a"></div><div style="left:449.7px;top:340.6px;width:5.6px;height:1.2px;background:#5a5a5a"></div>
<div style="left:1896.6px;top:154.6px;width:14.8px;height:600.2px;background:#f0f0f0;border-left:1px solid #e2e2e2"></div>
<div style="left:1899.6px;top:162.8px;width:8.4px;height:8px;background:#5cb85c"></div>
<div style="left:1899px;top:304.6px;width:8px;height:1.2px;background:#777"></div>
<div style="left:1905px;top:303.4px;width:2px;height:3.6px;background:#999"></div>
<div class="panel" style="left:405px;top:760.4px;width:1507.4px;height:286px;"></div>
<div style="left:406px;top:783.6px;width:1505.4px;height:1.2px;background:#8a8a8a"></div>
<span class="t" style="left:411.6px;top:764.25px;letter-spacing:0.33px;">Output</span>
<svg style="position:absolute;left:464.4px;top:768.6px;overflow:visible" width="8.4" height="8.4" viewBox="0 0 8.4 8.4" ><path d="M.5 .5l7.4 7.4M7.9 .5l-7.4 7.4" stroke="#111" stroke-width="1.4"/></svg>
<div class="sep" style="left:478.8px;top:761.4px;width:1.1px;height:18.6px;"></div>
<div style="left:478.8px;top:779px;width:1432.6px;height:1.1px;background:#8e8e8e"></div>
<div style="left:406px;top:780.1px;width:1505.4px;height:3.6px;background:#f7f7f7"></div>
<span class="t" style="left:484px;top:764.25px;letter-spacing:0.33px;">Versioning Output</span>
<div class="sep" style="left:623px;top:761.4px;width:1.1px;height:18px;"></div>
<span class="t" style="left:629.6px;top:764.25px;letter-spacing:0.33px;">Subversion - PaymentClientSDK.java (11 days ago)</span>
<div class="sep" style="left:975.4px;top:761.4px;width:1.1px;height:18px;"></div>
<span class="t" style="left:980.4px;top:764.25px;letter-spacing:0.33px;">Usages</span>
<div class="sep" style="left:1054.4px;top:761.4px;width:1.1px;height:18px;"></div>
<span class="t" style="left:1059.4px;top:764.25px;letter-spacing:0.33px;">Log Window</span>
<div class="sep" style="left:1157.4px;top:761.4px;width:1.1px;height:18px;"></div>
<svg style="position:absolute;left:1891.4px;top:767px;overflow:visible" width="11" height="9" viewBox="0 0 11 9" ><rect x=".5" y=".5" width="10" height="8" fill="#f4f4f4" stroke="#3a3a3a" stroke-width="1.200"/><rect x="2.500" y="5.500" width="5" height="1.800" fill="#111"/></svg>
<div style="left:2.4px;top:1051px;width:1915px;height:1.4px;background:#6c8cc4"></div>
<div style="left:2.4px;top:1052.4px;width:1915px;height:1.2px;background:#fbfbfb"></div>
<svg style="position:absolute;left:1786px;top:1055.6px;overflow:visible" width="18" height="18" viewBox="0 0 18 18" ><defs><radialGradient id="gl1" cx=".35" cy=".3" r=".8"><stop offset="0" stop-color="#e2f2fc"/><stop offset=".6" stop-color="#a6d0f0"/><stop offset="1" stop-color="#5e8fc0"/></radialGradient>
<linearGradient id="gl2" x1="0" y1="0" x2="1" y2="1"><stop offset="0" stop-color="#fffbe6"/><stop offset=".5" stop-color="#f4cf78"/><stop offset="1" stop-color="#d8921c"/></linearGradient></defs>
<circle cx="8.600" cy="8.700" r="7.500" fill="url(#gl1)" stroke="#5f7f9e" stroke-width=".9"/>
<path d="M6.500 2.500c2.500-1.500 6-.8 7.800 1.800 1.500 2.200 1.300 4.200.3 5.400-.8-.3-1.400.6-2 1.600-.8-.4-.6-1.800-1.600-2.300-1.300-.6-2.600.2-3.400-1-.7-1.200.8-2 .3-3.200-.4-1-1.600-1-1.400-2.300z" fill="#58b636"/>
<path d="M2 7.600h7.500l-2.600 2.500c1.800 2.400 4.800 3.200 8.300 2l1.200 1.600c-3.800 3.200-9.300 2.800-12.300-1.200L2 15.200z" fill="url(#gl2)" stroke="#96600a" stroke-width=".9" stroke-linejoin="round"/></svg>
<div style="left:1806.1px;top:1057.4px;width:2.3px;height:15.4px;background:#aab9e0"></div>
<span class="m" style="left:1834px;top:1055.4px">8 | 5</span>
<div style="left:1885.4px;top:1058px;width:1.2px;height:14.4px;background:#7f9bc6"></div>
<span class="m" style="left:1891.4px;top:1055.4px">INS</span>
<div style="left:0px;top:1px;width:2.5px;height:1078px;background:#5a90d0"></div>
<div style="left:0px;top:0px;width:1.35px;height:1079px;background:#2f5585"></div>
<div style="left:2.4px;top:26.2px;width:1.2px;height:1051px;background:#f8f4ec"></div>
<div style="left:1914.2px;top:26.2px;width:2.1px;height:1051px;background:#f8f2ec"></div>
<div style="left:2.4px;top:1051px;width:1914px;height:1.5px;background:#6484c0"></div>
<div style="left:1916.2px;top:1px;width:2.6px;height:1078px;background:#5a90d0"></div>
<div style="left:1917.3px;top:1px;width:1.5px;height:1078px;background:#1f4f8a"></div>
<div style="left:0px;top:1076.2px;width:1918.8px;height:1.1px;background:#f8f2ec"></div>
<div style="left:0px;top:1077.2px;width:1918.8px;height:1.8px;background:#5a94d8"></div>
</div></body></html>
